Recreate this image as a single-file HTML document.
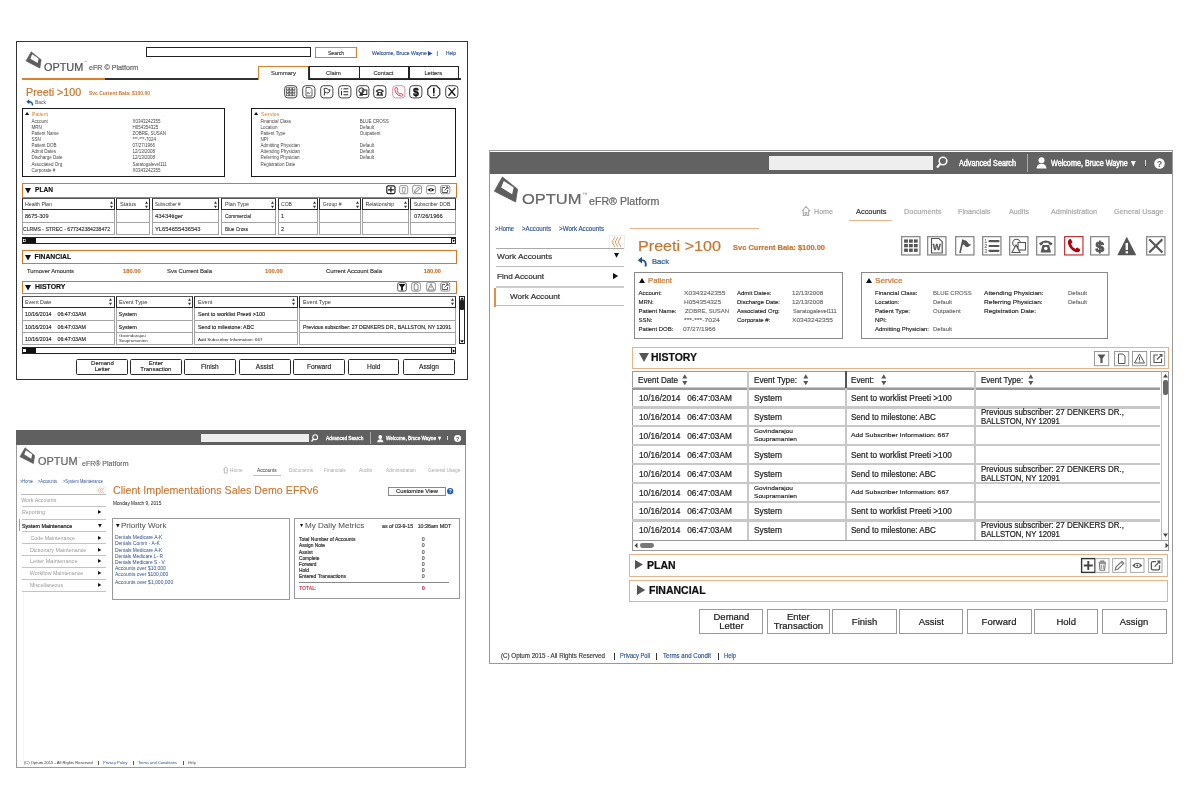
<!DOCTYPE html>
<html><head><meta charset="utf-8"><title>Optum eFR Platform wireframes</title>
<style>
html,body{margin:0;padding:0;background:#fff;}
body{width:1200px;height:800px;position:relative;overflow:hidden;font-family:"Liberation Sans",sans-serif;}
.a{position:absolute;box-sizing:border-box;}
.t{white-space:pre;}
.s{-webkit-text-stroke:0.22px currentColor;}
.s2{-webkit-text-stroke:0.14px currentColor;}
svg.a{overflow:visible;}
</style></head><body><div id="root" style="position:absolute;left:0;top:0;width:1200px;height:800px;will-change:transform;">
<div class="a" style="left:15.9px;top:41.1px;width:451.7px;height:338.5px;border:1.7px solid #333;background:#fff;"></div>
<div class="a" style="left:146px;top:47.3px;width:165.2px;height:9.5px;border:1.3px solid #222;"></div>
<div class="a" style="left:314.5px;top:47.3px;width:42.3px;height:10.3px;border:1.3px solid #d9822b;"></div>
<div class="a t s2" style="left:327.6px;top:49.9px;font-size:5.5px;line-height:6.6px;color:#333;transform:scaleX(0.918);transform-origin:0 0;">Search</div>
<div class="a t s2" style="left:372px;top:49.8px;font-size:5.5px;line-height:6.6px;color:#2b4f9f;transform:scaleX(0.933);transform-origin:0 0;">Welcome, Bruce Wayne ▶</div>
<div class="a t s2" style="left:436.5px;top:49.8px;font-size:5.5px;line-height:6.6px;color:#2b4f9f;">|</div>
<div class="a t s2" style="left:446px;top:49.8px;font-size:5.5px;line-height:6.6px;color:#2b4f9f;transform:scaleX(0.884);transform-origin:0 0;">Help</div>
<svg class="a" style="left:25.2px;top:51.4px;" width="17.16" height="17.82" viewBox="0 0 17.16 17.82"><polygon points="6.2,0.66 16.24,8.71 14.92,17.16 0.92,10.03" fill="#5e5e5e" stroke="#5e5e5e" stroke-width="0.53" stroke-linejoin="round"/><polygon points="7.13,3.3 13.6,7.59 12.67,12.01 5.41,7.66" fill="#fff"/></svg>
<div class="a t s" style="left:44px;top:60.98px;font-size:10.7px;line-height:12.83px;color:#555;transform:scaleX(1.018);transform-origin:0 0;">OPTUM</div>
<div class="a t" style="left:84px;top:60.75px;font-size:3px;line-height:3.6px;color:#666;">™</div>
<div class="a t s" style="left:88.7px;top:63.29px;font-size:7.92px;line-height:9.5px;color:#666;transform:scaleX(0.901);transform-origin:0 0;">eFR © Platform</div>
<div class="a" style="left:22px;top:78.3px;width:83px;height:1.7px;background:#d9822b;"></div>
<div class="a" style="left:105px;top:78.4px;width:154px;height:1.4px;background:#333;"></div>
<div class="a" style="left:308px;top:78.4px;width:153px;height:1.4px;background:#333;"></div>
<div class="a" style="left:258.3px;top:65.5px;width:50.5px;height:14px;border-top:1.4px solid #d9822b;border-left:1.4px solid #d9822b;border-right:1.4px solid #333;"></div>
<div class="a" style="left:308.5px;top:65.5px;width:51.2px;height:14.3px;border:1.3px solid #222;"></div>
<div class="a t s2" style="left:326.09px;top:69.72px;font-size:5.8px;line-height:6.96px;color:#333;">Claim</div>
<div class="a" style="left:358.5px;top:65.5px;width:51px;height:14.3px;border:1.3px solid #222;"></div>
<div class="a t s2" style="left:373.41px;top:69.72px;font-size:5.8px;line-height:6.96px;color:#333;">Contact</div>
<div class="a" style="left:408.3px;top:65.5px;width:51.1px;height:14.3px;border:1.3px solid #222;"></div>
<div class="a t s2" style="left:424.38px;top:69.72px;font-size:5.8px;line-height:6.96px;color:#333;">Letters</div>
<div class="a t s2" style="left:270.99px;top:69.72px;font-size:5.8px;line-height:6.96px;color:#333;">Summary</div>
<div class="a t s" style="left:25.7px;top:86.84px;font-size:10.42px;line-height:12.5px;color:#c8752f;transform:scaleX(1.032);transform-origin:0 0;">Preeti &gt;100</div>
<div class="a t" style="left:88.7px;top:90.91px;font-size:4.8px;line-height:5.76px;color:#c8752f;font-weight:bold;transform:scaleX(1.035);transform-origin:0 0;">Svc Current Bala: $100.00</div>
<svg class="a" style="left:25.5px;top:98.5px;" width="8" height="6.5" viewBox="0 0 8 6.5"><path d="M6.5 6.5 Q6.5 2.5 2.8 2.8" fill="none" stroke="#1f4f8f" stroke-width="1.4"/><path d="M0.3 2.8 L3.3 0.3 L3.3 5.3 Z" fill="#1f4f8f"/></svg>
<div class="a t" style="left:35.4px;top:99.37px;font-size:5.2px;line-height:6.24px;color:#2b5a9a;transform:scaleX(0.952);transform-origin:0 0;">Back</div>
<svg class="a" style="left:284.2px;top:85px;" width="13.6" height="13.6" viewBox="0 0 13.6 13.6"><rect x="0.7" y="0.7" width="12.2" height="12.2" rx="3" fill="#fff" stroke="#444" stroke-width="1.0"/><rect x="2.6" y="2.8" width="2.3" height="2" fill="none" stroke="#333" stroke-width="0.6"/><rect x="2.6" y="5.8" width="2.3" height="2" fill="none" stroke="#333" stroke-width="0.6"/><rect x="2.6" y="8.8" width="2.3" height="2" fill="none" stroke="#333" stroke-width="0.6"/><rect x="5.6" y="2.8" width="2.3" height="2" fill="none" stroke="#333" stroke-width="0.6"/><rect x="5.6" y="5.8" width="2.3" height="2" fill="none" stroke="#333" stroke-width="0.6"/><rect x="5.6" y="8.8" width="2.3" height="2" fill="none" stroke="#333" stroke-width="0.6"/><rect x="8.6" y="2.8" width="2.3" height="2" fill="none" stroke="#333" stroke-width="0.6"/><rect x="8.6" y="5.8" width="2.3" height="2" fill="none" stroke="#333" stroke-width="0.6"/><rect x="8.6" y="8.8" width="2.3" height="2" fill="none" stroke="#333" stroke-width="0.6"/></svg>
<svg class="a" style="left:301.5px;top:85px;" width="13.6" height="13.6" viewBox="0 0 13.6 13.6"><rect x="0.7" y="0.7" width="12.2" height="12.2" rx="3" fill="#fff" stroke="#444" stroke-width="1.0"/><path d="M4 2.5 H8.3 L10 4.2 V11 H4 Z" fill="none" stroke="#444" stroke-width="0.8"/><path d="M5 9.5 L6 7 L7 9 L8.5 7" fill="none" stroke="#444" stroke-width="0.6"/></svg>
<svg class="a" style="left:320px;top:85px;" width="13.6" height="13.6" viewBox="0 0 13.6 13.6"><rect x="0.7" y="0.7" width="12.2" height="12.2" rx="3" fill="#fff" stroke="#444" stroke-width="1.0"/><path d="M4.3 10.5 Q5 5 4 3.8 M4 3.8 Q6 2.5 7.5 4 Q9 6 10 4.5 Q10 7.5 8 8 Q6 8 5 7" fill="none" stroke="#222" stroke-width="0.9"/></svg>
<svg class="a" style="left:337.8px;top:85px;" width="13.6" height="13.6" viewBox="0 0 13.6 13.6"><rect x="0.7" y="0.7" width="12.2" height="12.2" rx="3" fill="#fff" stroke="#444" stroke-width="1.0"/><path d="M3.5 3.5 V4.3 M3.5 6 V10.3 M5.5 3.8 H10.3 M5.5 6.8 H10.3 M5.5 9.8 H10.3" stroke="#222" stroke-width="1"/></svg>
<svg class="a" style="left:355.5px;top:85px;" width="13.6" height="13.6" viewBox="0 0 13.6 13.6"><rect x="0.7" y="0.7" width="12.2" height="12.2" rx="3" fill="#fff" stroke="#444" stroke-width="1.0"/><circle cx="5.5" cy="5.5" r="2.6" fill="none" stroke="#222" stroke-width="1"/><rect x="6.3" y="5" width="4.5" height="4.5" fill="none" stroke="#222" stroke-width="1"/><path d="M5 7 L3 10.8 H7 Z" fill="#222"/></svg>
<svg class="a" style="left:373px;top:85px;" width="13.6" height="13.6" viewBox="0 0 13.6 13.6"><rect x="0.7" y="0.7" width="12.2" height="12.2" rx="3" fill="#fff" stroke="#444" stroke-width="1.0"/><path d="M2.5 6 Q6.8 1.8 11 6 L10 7.3 L8.3 6.5 V5.5 H5.3 V6.5 L3.6 7.3 Z M4.5 7 H9.1 L10.2 10.8 H3.4 Z" fill="#333"/><circle cx="6.8" cy="8.8" r="1" fill="#fff"/></svg>
<svg class="a" style="left:391.5px;top:85px;" width="13.6" height="13.6" viewBox="0 0 13.6 13.6"><rect x="0.7" y="0.7" width="12.2" height="12.2" rx="3" fill="#fff" stroke="#e090a8" stroke-width="1.0"/><path d="M3.2 3 Q4 2.2 5 2.7 L6 4.8 L5 5.8 Q5.5 8 8 9.2 L9 8.3 L11 9.8 Q10.8 11 9.5 11.2 Q5.5 11 3.5 7 Q2.5 4.5 3.2 3 Z" fill="none" stroke="#d04a68" stroke-width="1"/></svg>
<svg class="a" style="left:409px;top:85px;" width="13.6" height="13.6" viewBox="0 0 13.6 13.6"><rect x="0.7" y="0.7" width="12.2" height="12.2" rx="3" fill="#fff" stroke="#444" stroke-width="1.0"/><text x="6.8" y="11" font-size="10.5" font-weight="bold" text-anchor="middle" fill="#111" stroke="#111" stroke-width="0.4" font-family="Liberation Sans">$</text></svg>
<svg class="a" style="left:426.7px;top:85px;" width="13.6" height="13.6" viewBox="0 0 13.6 13.6"><path d="M4 0.8 H9.6 L12.8 4 V9.6 L9.6 12.8 H4 L0.8 9.6 V4 Z" fill="#fff" stroke="#222" stroke-width="1.1"/><path d="M6.8 2.8 V8.5 M6.8 9.6 V10.8" stroke="#111" stroke-width="1.6"/></svg>
<svg class="a" style="left:444.7px;top:85px;" width="13.6" height="13.6" viewBox="0 0 13.6 13.6"><rect x="0.7" y="0.7" width="12.2" height="12.2" rx="3" fill="#fff" stroke="#444" stroke-width="1.0"/><path d="M3.5 2.8 L10.3 10.8 M10.3 2.8 L3.5 10.8" stroke="#111" stroke-width="1.3"/></svg>
<div class="a" style="left:22.3px;top:107.6px;width:202.7px;height:69px;border:1.4px solid #1a1a1a;"></div>
<svg class="a" style="left:25.2px;top:111.8px;" width="4.2" height="3" viewBox="0 0 4.2 3"><path d="M2.1 0 L4.2 3 H0 Z" fill="#111"/></svg>
<div class="a t" style="left:31.75px;top:111.09px;font-size:5px;line-height:6px;color:#d9822b;transform:scaleX(1.028);transform-origin:0 0;">Patient</div>
<div class="a t" style="left:31.5px;top:118.88px;font-size:4.5px;line-height:5.4px;color:#444;">Account</div>
<div class="a t" style="left:132.4px;top:118.88px;font-size:4.5px;line-height:5.4px;color:#444;">X0343242355</div>
<div class="a t" style="left:31.5px;top:125.08px;font-size:4.5px;line-height:5.4px;color:#444;">MRN</div>
<div class="a t" style="left:132.4px;top:125.08px;font-size:4.5px;line-height:5.4px;color:#444;">H054354325</div>
<div class="a t" style="left:31.5px;top:131.28px;font-size:4.5px;line-height:5.4px;color:#444;">Patient Name</div>
<div class="a t" style="left:132.4px;top:131.28px;font-size:4.5px;line-height:5.4px;color:#444;">ZOBRE, SUSAN</div>
<div class="a t" style="left:31.5px;top:137.18px;font-size:4.5px;line-height:5.4px;color:#444;">SSN</div>
<div class="a t" style="left:132.4px;top:137.18px;font-size:4.5px;line-height:5.4px;color:#444;">***-***-7024</div>
<div class="a t" style="left:31.5px;top:143.18px;font-size:4.5px;line-height:5.4px;color:#444;">Patient DOB</div>
<div class="a t" style="left:132.4px;top:143.18px;font-size:4.5px;line-height:5.4px;color:#444;">07/27/1966</div>
<div class="a t" style="left:31.5px;top:149.38px;font-size:4.5px;line-height:5.4px;color:#444;">Admit Dates</div>
<div class="a t" style="left:132.4px;top:149.38px;font-size:4.5px;line-height:5.4px;color:#444;">12/13/2008</div>
<div class="a t" style="left:31.5px;top:155.48px;font-size:4.5px;line-height:5.4px;color:#444;">Discharge Date</div>
<div class="a t" style="left:132.4px;top:155.48px;font-size:4.5px;line-height:5.4px;color:#444;">12/13/2008</div>
<div class="a t" style="left:31.5px;top:161.68px;font-size:4.5px;line-height:5.4px;color:#444;">Associated Org</div>
<div class="a t" style="left:132.4px;top:161.68px;font-size:4.5px;line-height:5.4px;color:#444;">Saratogalevel111</div>
<div class="a t" style="left:31.5px;top:167.88px;font-size:4.5px;line-height:5.4px;color:#444;">Corporate #</div>
<div class="a t" style="left:132.4px;top:167.88px;font-size:4.5px;line-height:5.4px;color:#444;">X0343242355</div>
<div class="a" style="left:251.4px;top:107.6px;width:204.6px;height:69.4px;border:1.4px solid #1a1a1a;"></div>
<svg class="a" style="left:254.4px;top:111.8px;" width="4.2" height="3" viewBox="0 0 4.2 3"><path d="M2.1 0 L4.2 3 H0 Z" fill="#111"/></svg>
<div class="a t" style="left:260.8px;top:111.09px;font-size:5px;line-height:6px;color:#d9822b;transform:scaleX(1.110);transform-origin:0 0;">Service</div>
<div class="a t" style="left:260.6px;top:118.88px;font-size:4.5px;line-height:5.4px;color:#444;">Financial Class</div>
<div class="a t" style="left:359.7px;top:118.88px;font-size:4.5px;line-height:5.4px;color:#444;">BLUE CROSS</div>
<div class="a t" style="left:260.6px;top:125.08px;font-size:4.5px;line-height:5.4px;color:#444;">Location</div>
<div class="a t" style="left:359.7px;top:125.08px;font-size:4.5px;line-height:5.4px;color:#444;">Default</div>
<div class="a t" style="left:260.6px;top:131.28px;font-size:4.5px;line-height:5.4px;color:#444;">Patient Type</div>
<div class="a t" style="left:359.7px;top:131.28px;font-size:4.5px;line-height:5.4px;color:#444;">Outpatient</div>
<div class="a t" style="left:260.6px;top:137.18px;font-size:4.5px;line-height:5.4px;color:#444;">NPI</div>
<div class="a t" style="left:260.6px;top:143.18px;font-size:4.5px;line-height:5.4px;color:#444;">Admitting Physician</div>
<div class="a t" style="left:359.7px;top:143.18px;font-size:4.5px;line-height:5.4px;color:#444;">Default</div>
<div class="a t" style="left:260.6px;top:149.38px;font-size:4.5px;line-height:5.4px;color:#444;">Attending Physician</div>
<div class="a t" style="left:359.7px;top:149.38px;font-size:4.5px;line-height:5.4px;color:#444;">Default</div>
<div class="a t" style="left:260.6px;top:155.48px;font-size:4.5px;line-height:5.4px;color:#444;">Referring Physician</div>
<div class="a t" style="left:359.7px;top:155.48px;font-size:4.5px;line-height:5.4px;color:#444;">Default</div>
<div class="a t" style="left:260.6px;top:161.68px;font-size:4.5px;line-height:5.4px;color:#444;">Registration Date</div>
<div class="a" style="left:21.5px;top:183.3px;width:435.1px;height:14.3px;border:1.8px solid #d27a2a;"></div>
<svg class="a" style="left:25px;top:187.65px;" width="6" height="5.4" viewBox="0 0 6 5.4"><path d="M0 0 H6 L3 5.4 Z" fill="#111"/></svg>
<div class="a t s2" style="left:34.5px;top:186.49px;font-size:6.8px;line-height:8.16px;color:#111;font-weight:bold;transform:scaleX(0.972);transform-origin:0 0;">PLAN</div>
<svg class="a" style="left:386.1px;top:185.3px;" width="9.8" height="9.4" viewBox="0 0 9.8 9.4"><rect x="0.8" y="0.8" width="8.2" height="7.8" rx="1.5" fill="#fff" stroke="#222" stroke-width="1.2"/><path d="M4.9 2 V7.6 M2 4.8 H7.8" stroke="#111" stroke-width="1.2"/></svg>
<svg class="a" style="left:398.5px;top:185.3px;" width="9.4" height="9.4" viewBox="0 0 9.4 9.4"><rect x="0.65" y="0.65" width="8.1" height="8.1" rx="1.5" fill="#fff" stroke="#888" stroke-width="0.9"/><path d="M3 2.5 H6.6 M3.3 3 L3.6 7.2 H6 L6.3 3" fill="none" stroke="#777" stroke-width="0.7"/></svg>
<svg class="a" style="left:411.6px;top:185.3px;" width="10.2" height="9.4" viewBox="0 0 10.2 9.4"><rect x="0.65" y="0.65" width="8.9" height="8.1" rx="1.5" fill="#fff" stroke="#888" stroke-width="0.9"/><path d="M2.5 7.5 L3 5.5 L6.5 2 L8 3.5 L4.5 7 Z" fill="none" stroke="#555" stroke-width="0.8"/></svg>
<svg class="a" style="left:425.5px;top:185.3px;" width="10.1" height="9.4" viewBox="0 0 10.1 9.4"><rect x="0.65" y="0.65" width="8.8" height="8.1" rx="1.5" fill="#fff" stroke="#888" stroke-width="0.9"/><path d="M1.5 4.8 Q5 1.6 8.5 4.8 Q5 8 1.5 4.8 Z" fill="#111"/><circle cx="5" cy="4.8" r="0.9" fill="#fff"/></svg>
<svg class="a" style="left:440.1px;top:185.3px;" width="10.5" height="9.4" viewBox="0 0 10.5 9.4"><rect x="0.65" y="0.65" width="9.2" height="8.1" rx="1.5" fill="#fff" stroke="#888" stroke-width="0.9"/><path d="M5 2.5 H2.2 V7.5 H7.5 V5" fill="none" stroke="#444" stroke-width="0.9"/><path d="M4.5 5.5 L8 2 M6 2 H8 V4" fill="none" stroke="#444" stroke-width="0.9"/></svg>
<div class="a" style="left:21.5px;top:198.3px;width:93px;height:12.1px;border:1.2px solid #2a2a2a;border-top:1px solid #555;border-bottom-width:1.8px;"></div>
<div class="a t" style="left:25px;top:201.17px;font-size:5.2px;line-height:6.24px;color:#333;">Health Plan</div>
<svg class="a" style="left:109.5px;top:200.5px;" width="3" height="7.5" viewBox="0 0 3 7.5"><path d="M1.5 0.3 L3 2.8 H0 Z M1.5 7.2 L3 4.7 H0 Z" fill="#333"/></svg>
<div class="a" style="left:21.5px;top:210.4px;width:93px;height:12.9px;border:1.2px solid #a4a4a4;border-top-width:0;border-bottom-width:1.6px;"></div>
<div class="a" style="left:21.5px;top:223.3px;width:93px;height:11.7px;border:1.2px solid #a4a4a4;border-top-width:0;border-bottom-width:1.4px;"></div>
<div class="a t s2" style="left:25px;top:213.3px;font-size:5.5px;line-height:6.6px;color:#333;transform:scaleX(1.011);transform-origin:0 0;">8675-309</div>
<div class="a t s2" style="left:22.7px;top:225.7px;font-size:5.5px;line-height:6.6px;color:#333;transform:scaleX(0.930);transform-origin:0 0;">CLRMS - STREC - 677342384238472</div>
<div class="a" style="left:116px;top:198.3px;width:33.8px;height:12.1px;border:1.2px solid #2a2a2a;border-top:1px solid #555;border-bottom-width:1.8px;"></div>
<div class="a t" style="left:119.5px;top:201.17px;font-size:5.2px;line-height:6.24px;color:#333;transform:scaleX(1.085);transform-origin:0 0;">Status</div>
<svg class="a" style="left:144.8px;top:200.5px;" width="3" height="7.5" viewBox="0 0 3 7.5"><path d="M1.5 0.3 L3 2.8 H0 Z M1.5 7.2 L3 4.7 H0 Z" fill="#333"/></svg>
<div class="a" style="left:116px;top:210.4px;width:33.8px;height:12.9px;border:1.2px solid #a4a4a4;border-top-width:0;border-bottom-width:1.6px;"></div>
<div class="a" style="left:116px;top:223.3px;width:33.8px;height:11.7px;border:1.2px solid #a4a4a4;border-top-width:0;border-bottom-width:1.4px;"></div>
<div class="a" style="left:151.5px;top:198.3px;width:67.8px;height:12.1px;border:1.2px solid #2a2a2a;border-top:1px solid #555;border-bottom-width:1.8px;"></div>
<div class="a t" style="left:155px;top:201.17px;font-size:5.2px;line-height:6.24px;color:#333;transform:scaleX(0.880);transform-origin:0 0;">Subscriber #</div>
<svg class="a" style="left:214.3px;top:200.5px;" width="3" height="7.5" viewBox="0 0 3 7.5"><path d="M1.5 0.3 L3 2.8 H0 Z M1.5 7.2 L3 4.7 H0 Z" fill="#333"/></svg>
<div class="a" style="left:151.5px;top:210.4px;width:67.8px;height:12.9px;border:1.2px solid #a4a4a4;border-top-width:0;border-bottom-width:1.6px;"></div>
<div class="a" style="left:151.5px;top:223.3px;width:67.8px;height:11.7px;border:1.2px solid #a4a4a4;border-top-width:0;border-bottom-width:1.4px;"></div>
<div class="a t s2" style="left:155px;top:213.3px;font-size:5.5px;line-height:6.6px;color:#333;transform:scaleX(1.077);transform-origin:0 0;">43434tiger</div>
<div class="a t s2" style="left:155px;top:225.7px;font-size:5.5px;line-height:6.6px;color:#333;transform:scaleX(1.048);transform-origin:0 0;">YL654655436543</div>
<div class="a" style="left:221px;top:198.3px;width:55.4px;height:12.1px;border:1.2px solid #2a2a2a;border-top:1px solid #555;border-bottom-width:1.8px;"></div>
<div class="a t" style="left:224.5px;top:201.17px;font-size:5.2px;line-height:6.24px;color:#333;transform:scaleX(1.042);transform-origin:0 0;">Plan Type</div>
<svg class="a" style="left:271.4px;top:200.5px;" width="3" height="7.5" viewBox="0 0 3 7.5"><path d="M1.5 0.3 L3 2.8 H0 Z M1.5 7.2 L3 4.7 H0 Z" fill="#333"/></svg>
<div class="a" style="left:221px;top:210.4px;width:55.4px;height:12.9px;border:1.2px solid #a4a4a4;border-top-width:0;border-bottom-width:1.6px;"></div>
<div class="a" style="left:221px;top:223.3px;width:55.4px;height:11.7px;border:1.2px solid #a4a4a4;border-top-width:0;border-bottom-width:1.4px;"></div>
<div class="a t s2" style="left:224.5px;top:213.3px;font-size:5.5px;line-height:6.6px;color:#333;transform:scaleX(0.886);transform-origin:0 0;">Commercial</div>
<div class="a t s2" style="left:224.5px;top:225.7px;font-size:5.5px;line-height:6.6px;color:#333;transform:scaleX(0.855);transform-origin:0 0;">Blue Cross</div>
<div class="a" style="left:277.5px;top:198.3px;width:40.7px;height:12.1px;border:1.2px solid #2a2a2a;border-top:1px solid #555;border-bottom-width:1.8px;"></div>
<div class="a t" style="left:281px;top:201.17px;font-size:5.2px;line-height:6.24px;color:#333;transform:scaleX(0.976);transform-origin:0 0;">COB</div>
<svg class="a" style="left:313.2px;top:200.5px;" width="3" height="7.5" viewBox="0 0 3 7.5"><path d="M1.5 0.3 L3 2.8 H0 Z M1.5 7.2 L3 4.7 H0 Z" fill="#333"/></svg>
<div class="a" style="left:277.5px;top:210.4px;width:40.7px;height:12.9px;border:1.2px solid #a4a4a4;border-top-width:0;border-bottom-width:1.6px;"></div>
<div class="a" style="left:277.5px;top:223.3px;width:40.7px;height:11.7px;border:1.2px solid #a4a4a4;border-top-width:0;border-bottom-width:1.4px;"></div>
<div class="a t s2" style="left:281px;top:213.3px;font-size:5.5px;line-height:6.6px;color:#333;">1</div>
<div class="a t s2" style="left:281px;top:225.7px;font-size:5.5px;line-height:6.6px;color:#333;">2</div>
<div class="a" style="left:319.3px;top:198.3px;width:41.4px;height:12.1px;border:1.2px solid #2a2a2a;border-top:1px solid #555;border-bottom-width:1.8px;"></div>
<div class="a t" style="left:322.8px;top:201.17px;font-size:5.2px;line-height:6.24px;color:#333;">Group #</div>
<svg class="a" style="left:355.7px;top:200.5px;" width="3" height="7.5" viewBox="0 0 3 7.5"><path d="M1.5 0.3 L3 2.8 H0 Z M1.5 7.2 L3 4.7 H0 Z" fill="#333"/></svg>
<div class="a" style="left:319.3px;top:210.4px;width:41.4px;height:12.9px;border:1.2px solid #a4a4a4;border-top-width:0;border-bottom-width:1.6px;"></div>
<div class="a" style="left:319.3px;top:223.3px;width:41.4px;height:11.7px;border:1.2px solid #a4a4a4;border-top-width:0;border-bottom-width:1.4px;"></div>
<div class="a" style="left:362px;top:198.3px;width:47.2px;height:12.1px;border:1.2px solid #2a2a2a;border-top:1px solid #555;border-bottom-width:1.8px;"></div>
<div class="a t" style="left:365.5px;top:201.17px;font-size:5.2px;line-height:6.24px;color:#333;">Relationship</div>
<svg class="a" style="left:404.2px;top:200.5px;" width="3" height="7.5" viewBox="0 0 3 7.5"><path d="M1.5 0.3 L3 2.8 H0 Z M1.5 7.2 L3 4.7 H0 Z" fill="#333"/></svg>
<div class="a" style="left:362px;top:210.4px;width:47.2px;height:12.9px;border:1.2px solid #a4a4a4;border-top-width:0;border-bottom-width:1.6px;"></div>
<div class="a" style="left:362px;top:223.3px;width:47.2px;height:11.7px;border:1.2px solid #a4a4a4;border-top-width:0;border-bottom-width:1.4px;"></div>
<div class="a" style="left:410.4px;top:198.3px;width:45.2px;height:12.1px;border:1.2px solid #2a2a2a;border-top:1px solid #555;border-bottom-width:1.8px;"></div>
<div class="a t" style="left:413.9px;top:201.17px;font-size:5.2px;line-height:6.24px;color:#333;transform:scaleX(0.969);transform-origin:0 0;">Subscriber DOB</div>
<div class="a" style="left:410.4px;top:210.4px;width:45.2px;height:12.9px;border:1.2px solid #a4a4a4;border-top-width:0;border-bottom-width:1.6px;"></div>
<div class="a" style="left:410.4px;top:223.3px;width:45.2px;height:11.7px;border:1.2px solid #a4a4a4;border-top-width:0;border-bottom-width:1.4px;"></div>
<div class="a t s2" style="left:413.9px;top:213.3px;font-size:5.5px;line-height:6.6px;color:#333;transform:scaleX(1.043);transform-origin:0 0;">07/26/1966</div>
<div class="a" style="left:21.5px;top:237px;width:434.7px;height:6.6px;border:1.2px solid #222;"></div>
<div class="a" style="left:22.5px;top:238px;width:13.5px;height:4.6px;background:#111;"></div>
<div class="a" style="left:23px;top:238.6px;width:3px;height:3.4px;background:#fff;"></div>
<svg class="a" style="left:23.2px;top:238.8px;" width="2.6" height="3" viewBox="0 0 2.6 3"><path d="M0.3 1.5 L2.5 0 V3 Z" fill="#111"/></svg>
<div class="a" style="left:451px;top:238px;width:5.2px;height:5.6px;border:1px solid #222;"></div>
<svg class="a" style="left:452px;top:239px;" width="3.5" height="3.5" viewBox="0 0 3.5 3.5"><path d="M3 1.7 L0.8 0.2 V3.2 Z" fill="#111"/></svg>
<div class="a" style="left:21.5px;top:250.4px;width:435.1px;height:13.9px;border:1.8px solid #d27a2a;"></div>
<svg class="a" style="left:25px;top:254.55px;" width="6" height="5.4" viewBox="0 0 6 5.4"><path d="M0 0 H6 L3 5.4 Z" fill="#111"/></svg>
<div class="a t s2" style="left:34.5px;top:253.39px;font-size:6.8px;line-height:8.16px;color:#111;font-weight:bold;">FINANCIAL</div>
<div class="a t s2" style="left:26.5px;top:268.24px;font-size:5.6px;line-height:6.72px;color:#333;transform:scaleX(1.032);transform-origin:0 0;">Turnover Amounts</div>
<div class="a t s2" style="left:123.3px;top:268.24px;font-size:5.6px;line-height:6.72px;color:#c8752f;font-weight:bold;transform:scaleX(1.039);transform-origin:0 0;">180.00</div>
<div class="a t s2" style="left:167.4px;top:268.24px;font-size:5.6px;line-height:6.72px;color:#333;transform:scaleX(1.063);transform-origin:0 0;">Svs Current Bala</div>
<div class="a t s2" style="left:264.7px;top:268.24px;font-size:5.6px;line-height:6.72px;color:#c8752f;font-weight:bold;transform:scaleX(1.039);transform-origin:0 0;">100.00</div>
<div class="a t s2" style="left:326px;top:268.24px;font-size:5.6px;line-height:6.72px;color:#333;transform:scaleX(1.058);transform-origin:0 0;">Current Account Bala</div>
<div class="a t s2" style="left:423.8px;top:268.24px;font-size:5.6px;line-height:6.72px;color:#c8752f;font-weight:bold;">180.00</div>
<div class="a" style="left:21.5px;top:280.5px;width:435.1px;height:13.7px;border:1.8px solid #d27a2a;"></div>
<svg class="a" style="left:25px;top:284.55px;" width="6" height="5.4" viewBox="0 0 6 5.4"><path d="M0 0 H6 L3 5.4 Z" fill="#111"/></svg>
<div class="a t s2" style="left:34.5px;top:283.39px;font-size:6.8px;line-height:8.16px;color:#111;font-weight:bold;transform:scaleX(1.022);transform-origin:0 0;">HISTORY</div>
<svg class="a" style="left:396.6px;top:282.4px;" width="10" height="9.8" viewBox="0 0 10 9.8"><rect x="0.7" y="0.7" width="8.6" height="8.4" rx="1.5" fill="#fff" stroke="#555" stroke-width="1.0"/><path d="M1.6 2 H8.4 L5.9 5.2 V8.6 H4.1 V5.2 Z" fill="#111"/></svg>
<svg class="a" style="left:411px;top:282.4px;" width="10" height="9.8" viewBox="0 0 10 9.8"><rect x="0.65" y="0.65" width="8.7" height="8.5" rx="1.5" fill="#fff" stroke="#888" stroke-width="0.9"/><path d="M3.2 2 H6 L7 3 V8 H3.2 Z" fill="none" stroke="#555" stroke-width="0.7"/></svg>
<svg class="a" style="left:425.5px;top:282.4px;" width="10" height="9.8" viewBox="0 0 10 9.8"><rect x="0.65" y="0.65" width="8.7" height="8.5" rx="1.5" fill="#fff" stroke="#888" stroke-width="0.9"/><path d="M5 1.8 L8.2 8 H1.8 Z" fill="none" stroke="#555" stroke-width="0.7"/><path d="M5 4 V6.2" stroke="#555" stroke-width="0.7"/></svg>
<svg class="a" style="left:440.2px;top:282.4px;" width="10.4" height="9.8" viewBox="0 0 10.4 9.8"><rect x="0.65" y="0.65" width="9.1" height="8.5" rx="1.5" fill="#fff" stroke="#888" stroke-width="0.9"/><path d="M5 2.5 H2.2 V7.5 H7.5 V5" fill="none" stroke="#444" stroke-width="0.9"/><path d="M4.5 5.5 L8 2 M6 2 H8 V4" fill="none" stroke="#444" stroke-width="0.9"/></svg>
<div class="a" style="left:21.5px;top:295.8px;width:93.3px;height:11.8px;border:1.2px solid #2a2a2a;border-top:1px solid #555;border-bottom-width:1.8px;"></div>
<div class="a t" style="left:25px;top:298.57px;font-size:5.2px;line-height:6.24px;color:#333;transform:scaleX(1.026);transform-origin:0 0;">Event Date</div>
<svg class="a" style="left:109.3px;top:298px;" width="3" height="7.5" viewBox="0 0 3 7.5"><path d="M1.5 0.3 L3 2.8 H0 Z M1.5 7.2 L3 4.7 H0 Z" fill="#333"/></svg>
<div class="a" style="left:21.5px;top:307.6px;width:93.3px;height:13.2px;border:1.2px solid #a4a4a4;border-top-width:0;border-bottom-width:1.6px;"></div>
<div class="a" style="left:21.5px;top:320.8px;width:93.3px;height:12.4px;border:1.2px solid #a4a4a4;border-top-width:0;border-bottom-width:1.6px;"></div>
<div class="a" style="left:21.5px;top:333.2px;width:93.3px;height:11.6px;border:1.2px solid #a4a4a4;border-top-width:0;border-bottom-width:1.6px;"></div>
<div class="a" style="left:115.6px;top:295.8px;width:77.9px;height:11.8px;border:1.2px solid #2a2a2a;border-top:1px solid #555;border-bottom-width:1.8px;"></div>
<div class="a t" style="left:119.1px;top:298.57px;font-size:5.2px;line-height:6.24px;color:#333;transform:scaleX(1.096);transform-origin:0 0;">Event Type</div>
<svg class="a" style="left:188px;top:298px;" width="3" height="7.5" viewBox="0 0 3 7.5"><path d="M1.5 0.3 L3 2.8 H0 Z M1.5 7.2 L3 4.7 H0 Z" fill="#333"/></svg>
<div class="a" style="left:115.6px;top:307.6px;width:77.9px;height:13.2px;border:1.2px solid #a4a4a4;border-top-width:0;border-bottom-width:1.6px;"></div>
<div class="a" style="left:115.6px;top:320.8px;width:77.9px;height:12.4px;border:1.2px solid #a4a4a4;border-top-width:0;border-bottom-width:1.6px;"></div>
<div class="a" style="left:115.6px;top:333.2px;width:77.9px;height:11.6px;border:1.2px solid #a4a4a4;border-top-width:0;border-bottom-width:1.6px;"></div>
<div class="a" style="left:194.2px;top:295.8px;width:103.4px;height:11.8px;border:1.2px solid #2a2a2a;border-top:1px solid #555;border-bottom-width:1.8px;"></div>
<div class="a t" style="left:197.7px;top:298.57px;font-size:5.2px;line-height:6.24px;color:#333;transform:scaleX(1.083);transform-origin:0 0;">Event</div>
<svg class="a" style="left:292.1px;top:298px;" width="3" height="7.5" viewBox="0 0 3 7.5"><path d="M1.5 0.3 L3 2.8 H0 Z M1.5 7.2 L3 4.7 H0 Z" fill="#333"/></svg>
<div class="a" style="left:194.2px;top:307.6px;width:103.4px;height:13.2px;border:1.2px solid #a4a4a4;border-top-width:0;border-bottom-width:1.6px;"></div>
<div class="a" style="left:194.2px;top:320.8px;width:103.4px;height:12.4px;border:1.2px solid #a4a4a4;border-top-width:0;border-bottom-width:1.6px;"></div>
<div class="a" style="left:194.2px;top:333.2px;width:103.4px;height:11.6px;border:1.2px solid #a4a4a4;border-top-width:0;border-bottom-width:1.6px;"></div>
<div class="a" style="left:299.4px;top:295.8px;width:156.6px;height:11.8px;border:1.2px solid #2a2a2a;border-top:1px solid #555;border-bottom-width:1.8px;"></div>
<div class="a t" style="left:302.9px;top:298.57px;font-size:5.2px;line-height:6.24px;color:#333;transform:scaleX(1.080);transform-origin:0 0;">Event Type</div>
<svg class="a" style="left:450.5px;top:298px;" width="3" height="7.5" viewBox="0 0 3 7.5"><path d="M1.5 0.3 L3 2.8 H0 Z M1.5 7.2 L3 4.7 H0 Z" fill="#333"/></svg>
<div class="a" style="left:299.4px;top:307.6px;width:156.6px;height:13.2px;border:1.2px solid #a4a4a4;border-top-width:0;border-bottom-width:1.6px;"></div>
<div class="a" style="left:299.4px;top:320.8px;width:156.6px;height:12.4px;border:1.2px solid #a4a4a4;border-top-width:0;border-bottom-width:1.6px;"></div>
<div class="a" style="left:299.4px;top:333.2px;width:156.6px;height:11.6px;border:1.2px solid #a4a4a4;border-top-width:0;border-bottom-width:1.6px;"></div>
<div class="a t s2" style="left:25px;top:311px;font-size:5.5px;line-height:6.6px;color:#222;transform:scaleX(0.964);transform-origin:0 0;">10/16/2014    06:47:03AM</div>
<div class="a t s2" style="left:118.5px;top:311px;font-size:5.5px;line-height:6.6px;color:#222;">System</div>
<div class="a t s2" style="left:198px;top:311px;font-size:5.5px;line-height:6.6px;color:#222;">Sent to worklist Preeti &gt;100</div>
<div class="a t s2" style="left:25px;top:323.8px;font-size:5.5px;line-height:6.6px;color:#222;transform:scaleX(0.964);transform-origin:0 0;">10/16/2014    06:47:03AM</div>
<div class="a t s2" style="left:118.5px;top:323.8px;font-size:5.5px;line-height:6.6px;color:#222;">System</div>
<div class="a t s2" style="left:198px;top:323.8px;font-size:5.5px;line-height:6.6px;color:#222;transform:scaleX(0.964);transform-origin:0 0;">Send to milestone: ABC</div>
<div class="a t s2" style="left:302.6px;top:323.8px;font-size:5.5px;line-height:6.6px;color:#222;transform:scaleX(0.951);transform-origin:0 0;">Previous subscriber: 27 DENKERS DR., BALLSTON, NY 12091</div>
<div class="a t s2" style="left:25px;top:335.8px;font-size:5.5px;line-height:6.6px;color:#222;transform:scaleX(0.964);transform-origin:0 0;">10/16/2014    06:47:03AM</div>
<div class="a t" style="left:118.5px;top:334.19px;font-size:3.8px;line-height:4.56px;color:#333;transform:scaleX(1.186);transform-origin:0 0;">Govindarajou</div>
<div class="a t" style="left:118.5px;top:339.39px;font-size:3.8px;line-height:4.56px;color:#333;transform:scaleX(1.161);transform-origin:0 0;">Soupramanien</div>
<div class="a t" style="left:198px;top:336.5px;font-size:4.3px;line-height:5.16px;color:#222;transform:scaleX(1.048);transform-origin:0 0;">Add Subscriber Information: 667</div>
<div class="a" style="left:458.6px;top:296px;width:6.2px;height:47.6px;border:1.1px solid #222;"></div>
<div class="a" style="left:459.8px;top:300px;width:3.8px;height:10px;background:#222;border-radius:1px;"></div>
<svg class="a" style="left:459.6px;top:296.5px;" width="4.2" height="3" viewBox="0 0 4.2 3"><path d="M2.1 0.3 L4 2.8 H0.2 Z" fill="#111"/></svg>
<svg class="a" style="left:459.6px;top:340px;" width="4.2" height="3" viewBox="0 0 4.2 3"><path d="M2.1 2.8 L4 0.3 H0.2 Z" fill="#111"/></svg>
<div class="a" style="left:21.5px;top:347px;width:434.5px;height:6.8px;border:1.2px solid #222;"></div>
<div class="a" style="left:22.5px;top:348px;width:13.5px;height:4.8px;background:#111;"></div>
<div class="a" style="left:23px;top:348.6px;width:3px;height:3.6px;background:#fff;"></div>
<div class="a" style="left:450.5px;top:347px;width:5.5px;height:6.8px;border:1px solid #222;"></div>
<svg class="a" style="left:451.5px;top:348.5px;" width="3.5" height="4" viewBox="0 0 3.5 4"><path d="M3 2 L0.8 0.3 V3.7 Z" fill="#111"/></svg>
<div class="a" style="left:76.3px;top:358.6px;width:52.2px;height:16px;border:1.8px solid #2a2a2a;border-radius:1.5px;"></div>
<div class="a t s2" style="left:91.06px;top:359.81px;font-size:6px;line-height:7.2px;color:#222;">Demand</div>
<div class="a t s2" style="left:94.73px;top:366.11px;font-size:6px;line-height:7.2px;color:#222;">Letter</div>
<div class="a" style="left:130px;top:358.6px;width:51.8px;height:16px;border:1.8px solid #2a2a2a;border-radius:1.5px;"></div>
<div class="a t s2" style="left:148.73px;top:359.81px;font-size:6px;line-height:7.2px;color:#222;">Enter</div>
<div class="a t s2" style="left:140.34px;top:366.11px;font-size:6px;line-height:7.2px;color:#222;">Transaction</div>
<div class="a" style="left:184px;top:358.6px;width:51.8px;height:16px;border:1.8px solid #2a2a2a;border-radius:1.5px;"></div>
<div class="a t s2" style="left:201.1px;top:362.76px;font-size:6.6px;line-height:7.92px;color:#222;">Finish</div>
<div class="a" style="left:238.6px;top:358.6px;width:52px;height:16px;border:1.8px solid #2a2a2a;border-radius:1.5px;"></div>
<div class="a t s2" style="left:255.8px;top:362.76px;font-size:6.6px;line-height:7.92px;color:#222;">Assist</div>
<div class="a" style="left:293.4px;top:358.6px;width:51.2px;height:16px;border:1.8px solid #2a2a2a;border-radius:1.5px;"></div>
<div class="a t s2" style="left:306.9px;top:362.76px;font-size:6.6px;line-height:7.92px;color:#222;">Forward</div>
<div class="a" style="left:348px;top:358.6px;width:51.4px;height:16px;border:1.8px solid #2a2a2a;border-radius:1.5px;"></div>
<div class="a t s2" style="left:366.91px;top:362.76px;font-size:6.6px;line-height:7.92px;color:#222;">Hold</div>
<div class="a" style="left:403px;top:358.6px;width:52px;height:16px;border:1.8px solid #2a2a2a;border-radius:1.5px;"></div>
<div class="a t s2" style="left:419.09px;top:362.76px;font-size:6.6px;line-height:7.92px;color:#222;">Assign</div>
<div class="a" style="left:16.3px;top:430.3px;width:449.7px;height:337.7px;border:1px solid #9a9a9a;background:#fff;"></div>
<div class="a" style="left:16.3px;top:430.3px;width:449.7px;height:14.9px;background:#606060;"></div>
<div class="a" style="left:201px;top:434px;width:107.5px;height:8.2px;background:#eee;"></div>
<svg class="a" style="left:310.8px;top:434px;" width="6.8" height="8" viewBox="0 0 6.8 8"><circle cx="4.2" cy="3.2" r="2.4" fill="none" stroke="#fff" stroke-width="1.1"/><line x1="2.5" y1="5" x2="0.5" y2="7.5" stroke="#fff" stroke-width="1.3"/></svg>
<div class="a t" style="left:325.6px;top:435.06px;font-size:5.4px;line-height:6.48px;color:#fff;transform:scaleX(0.877);transform-origin:0 0;-webkit-text-stroke:0.3px #fff;">Advanced Search</div>
<div class="a" style="left:370.3px;top:432px;width:0.7px;height:11.5px;background:#aaa;"></div>
<svg class="a" style="left:377px;top:434.5px;" width="6.6" height="7.5" viewBox="0 0 6.6 7.5"><circle cx="3.3" cy="2" r="1.9" fill="#fff"/><path d="M0.2 7.3 Q0.4 4.3 3.3 4.3 Q6.2 4.3 6.4 7.3 Z" fill="#fff"/></svg>
<div class="a t" style="left:386px;top:435.06px;font-size:5.4px;line-height:6.48px;color:#fff;transform:scaleX(0.869);transform-origin:0 0;-webkit-text-stroke:0.3px #fff;">Welcome, Bruce Wayne ▼</div>
<div class="a" style="left:447.2px;top:436px;width:0.7px;height:4px;background:#ddd;"></div>
<svg class="a" style="left:453.6px;top:434.6px;" width="7.2" height="7.2" viewBox="0 0 7.2 7.2"><circle cx="3.6" cy="3.6" r="3.5" fill="#fff"/><text x="3.6" y="5.8" font-size="6" font-weight="bold" text-anchor="middle" fill="#606060" font-family="Liberation Sans">?</text></svg>
<svg class="a" style="left:18.8px;top:447px;" width="16.64" height="17.28" viewBox="0 0 16.64 17.28"><polygon points="6.02,0.64 15.74,8.45 14.46,16.64 0.9,9.73" fill="#5e5e5e" stroke="#5e5e5e" stroke-width="0.51" stroke-linejoin="round"/><polygon points="6.91,3.2 13.18,7.36 12.29,11.65 5.25,7.42" fill="#fff"/></svg>
<div class="a t s" style="left:37.5px;top:455.78px;font-size:10px;line-height:12px;color:#666;transform:scaleX(1.094);transform-origin:0 0;">OPTUM</div>
<div class="a t" style="left:78px;top:456.75px;font-size:3px;line-height:3.6px;color:#888;">™</div>
<div class="a t s2" style="left:82px;top:459.62px;font-size:6.5px;line-height:7.8px;color:#666;transform:scaleX(1.079);transform-origin:0 0;">eFR® Platform</div>
<svg class="a" style="left:222.5px;top:466px;" width="5.5" height="7.5" viewBox="0 0 5.5 7.5"><path d="M0.5 3.5 L2.7 0.8 L5 3.5 M1.3 3 V7 H4.2 V3" fill="none" stroke="#aaa" stroke-width="0.8"/></svg>
<div class="a t" style="left:230px;top:466.97px;font-size:5.2px;line-height:6.24px;color:#aaa;transform:scaleX(0.908);transform-origin:0 0;">Home</div>
<div class="a t" style="left:257.4px;top:466.97px;font-size:5.2px;line-height:6.24px;color:#333;transform:scaleX(0.926);transform-origin:0 0;">Accounts</div>
<div class="a t" style="left:289px;top:466.97px;font-size:5.2px;line-height:6.24px;color:#aaa;transform:scaleX(0.920);transform-origin:0 0;">Documents</div>
<div class="a t" style="left:324.3px;top:466.97px;font-size:5.2px;line-height:6.24px;color:#aaa;transform:scaleX(0.927);transform-origin:0 0;">Financials</div>
<div class="a t" style="left:358.6px;top:466.97px;font-size:5.2px;line-height:6.24px;color:#aaa;transform:scaleX(0.927);transform-origin:0 0;">Audits</div>
<div class="a t" style="left:386px;top:466.97px;font-size:5.2px;line-height:6.24px;color:#aaa;transform:scaleX(0.911);transform-origin:0 0;">Administration</div>
<div class="a t" style="left:427.6px;top:466.97px;font-size:5.2px;line-height:6.24px;color:#aaa;transform:scaleX(0.926);transform-origin:0 0;">General Usage</div>
<div class="a" style="left:252.5px;top:474.8px;width:28.5px;height:1px;background:#e8b48a;"></div>
<div class="a t" style="left:20px;top:478.39px;font-size:5px;line-height:6px;color:#2b4f8f;transform:scaleX(0.800);transform-origin:0 0;">&gt;Home</div>
<div class="a t" style="left:38px;top:478.39px;font-size:5px;line-height:6px;color:#2b4f8f;transform:scaleX(0.809);transform-origin:0 0;">&gt;Accounts</div>
<div class="a t" style="left:63px;top:478.39px;font-size:5px;line-height:6px;color:#2b4f8f;transform:scaleX(0.806);transform-origin:0 0;">&gt;System Maintenance</div>
<svg class="a" style="left:96px;top:485.5px;" width="9.8" height="9" viewBox="0 0 9.8 9"><rect x="0.3" y="0.3" width="9.2" height="8.4" fill="#fff" stroke="#eee" stroke-width="0.6"/><path d="M4 1.5 L2 4.5 L4 7.5 M6 1.5 L4 4.5 L6 7.5 M8 1.5 L6 4.5 L8 7.5" fill="none" stroke="#e0a060" stroke-width="0.7"/></svg>
<div class="a" style="left:20.5px;top:494px;width:85.3px;height:0.9px;background:#bbb;"></div>
<div class="a t" style="left:21.2px;top:496.82px;font-size:5.3px;line-height:6.36px;color:#999;">Work Accounts</div>
<div class="a t" style="left:22px;top:508.92px;font-size:5.3px;line-height:6.36px;color:#999;">Reporting</div>
<svg class="a" style="left:98.4px;top:510.1px;" width="3.4" height="3.8" viewBox="0 0 3.4 3.8"><path d="M0 0 L3.4 1.9 L0 3.8 Z" fill="#111"/></svg>
<div class="a t" style="left:21.5px;top:522.72px;font-size:5.3px;line-height:6.36px;color:#222;transform:scaleX(1.016);transform-origin:0 0;-webkit-text-stroke:0.2px #222;">System Maintenance</div>
<svg class="a" style="left:98.2px;top:524.2px;" width="3.8" height="3.4" viewBox="0 0 3.8 3.4"><path d="M0 0 H3.8 L1.9 3.4 Z" fill="#111"/></svg>
<div class="a t" style="left:30.5px;top:535.02px;font-size:5.3px;line-height:6.36px;color:#999;">Code Maintenance</div>
<svg class="a" style="left:98.4px;top:536.2px;" width="3.4" height="3.8" viewBox="0 0 3.4 3.8"><path d="M0 0 L3.4 1.9 L0 3.8 Z" fill="#111"/></svg>
<div class="a t" style="left:29.8px;top:546.52px;font-size:5.3px;line-height:6.36px;color:#999;transform:scaleX(1.018);transform-origin:0 0;">Dictionary Maintenance</div>
<svg class="a" style="left:98.4px;top:547.7px;" width="3.4" height="3.8" viewBox="0 0 3.4 3.8"><path d="M0 0 L3.4 1.9 L0 3.8 Z" fill="#111"/></svg>
<div class="a t" style="left:29.8px;top:558.22px;font-size:5.3px;line-height:6.36px;color:#999;transform:scaleX(1.047);transform-origin:0 0;">Letter Maintenance</div>
<svg class="a" style="left:98.4px;top:559.4px;" width="3.4" height="3.8" viewBox="0 0 3.4 3.8"><path d="M0 0 L3.4 1.9 L0 3.8 Z" fill="#111"/></svg>
<div class="a t" style="left:29.8px;top:570.12px;font-size:5.3px;line-height:6.36px;color:#999;">Workflow Maintenance</div>
<svg class="a" style="left:98.4px;top:571.3px;" width="3.4" height="3.8" viewBox="0 0 3.4 3.8"><path d="M0 0 L3.4 1.9 L0 3.8 Z" fill="#111"/></svg>
<div class="a t" style="left:29.8px;top:582.22px;font-size:5.3px;line-height:6.36px;color:#999;transform:scaleX(0.983);transform-origin:0 0;">Miscellaneous</div>
<svg class="a" style="left:98.4px;top:583.4px;" width="3.4" height="3.8" viewBox="0 0 3.4 3.8"><path d="M0 0 L3.4 1.9 L0 3.8 Z" fill="#111"/></svg>
<div class="a" style="left:21.5px;top:505.8px;width:84px;height:1px;background:#c4c4c4;"></div>
<div class="a" style="left:21.5px;top:518.9px;width:84px;height:1px;background:#c4c4c4;"></div>
<div class="a" style="left:21.5px;top:531.3px;width:84px;height:1px;background:#c4c4c4;"></div>
<div class="a" style="left:21.5px;top:543px;width:84px;height:1px;background:#c4c4c4;"></div>
<div class="a" style="left:21.5px;top:554.9px;width:84px;height:1px;background:#c4c4c4;"></div>
<div class="a" style="left:21.5px;top:567px;width:84px;height:1px;background:#c4c4c4;"></div>
<div class="a" style="left:21.5px;top:579px;width:84px;height:1px;background:#c4c4c4;"></div>
<div class="a" style="left:21.5px;top:591.1px;width:84px;height:1px;background:#c4c4c4;"></div>
<div class="a" style="left:19px;top:519.2px;width:1.4px;height:12px;background:#e0904a;"></div>
<div class="a" style="left:23.3px;top:592px;width:0.6px;height:175px;background:#f7f7f7;"></div>
<div class="a t" style="left:112.5px;top:483.8px;font-size:11px;line-height:13.2px;color:#c8752f;transform:scaleX(0.971);transform-origin:0 0;-webkit-text-stroke:0.12px #c8752f;">Client Implementations Sales Demo EFRv6</div>
<div class="a t" style="left:112.5px;top:499.59px;font-size:5px;line-height:6px;color:#333;transform:scaleX(0.944);transform-origin:0 0;-webkit-text-stroke:0.05px #333;">Monday March 9, 2015</div>
<div class="a" style="left:439px;top:486.6px;width:7px;height:9px;"></div>
<div class="a" style="left:388px;top:486.6px;width:58px;height:9.2px;border:1px solid #888;"></div>
<div class="a t s2" style="left:396px;top:487.94px;font-size:5.6px;line-height:6.72px;color:#222;transform:scaleX(1.049);transform-origin:0 0;">Customize View</div>
<svg class="a" style="left:447px;top:487.8px;" width="6.4" height="6.4" viewBox="0 0 6.4 6.4"><circle cx="3.2" cy="3.2" r="3.1" fill="#1f5fa8"/><text x="3.2" y="5.2" font-size="5" font-weight="bold" text-anchor="middle" fill="#fff" font-family="Liberation Sans">?</text></svg>
<div class="a" style="left:112px;top:517.7px;width:177.9px;height:82.1px;border:1px solid #9a9a9a;"></div>
<svg class="a" style="left:116.3px;top:523.6px;" width="3.6" height="3.4" viewBox="0 0 3.6 3.4"><path d="M0 0 H3.6 L1.8 3.4 Z" fill="#111"/></svg>
<div class="a t" style="left:120.8px;top:521.32px;font-size:7.7px;line-height:9.24px;color:#555;transform:scaleX(1.036);transform-origin:0 0;-webkit-text-stroke:0.05px #555;">Priority Work</div>
<div class="a t" style="left:115px;top:534.17px;font-size:5.2px;line-height:6.24px;color:#2b4f8f;transform:scaleX(0.950);transform-origin:0 0;">Denials Medicare A-K</div>
<div class="a t" style="left:115px;top:540.27px;font-size:5.2px;line-height:6.24px;color:#2b4f8f;transform:scaleX(0.955);transform-origin:0 0;">Denials Comm - A-K</div>
<div class="a t" style="left:115px;top:546.67px;font-size:5.2px;line-height:6.24px;color:#2b4f8f;transform:scaleX(0.950);transform-origin:0 0;">Denials Medicare A-K</div>
<div class="a t" style="left:115px;top:552.67px;font-size:5.2px;line-height:6.24px;color:#2b4f8f;transform:scaleX(0.933);transform-origin:0 0;">Denials Medicare L- R</div>
<div class="a t" style="left:115px;top:558.77px;font-size:5.2px;line-height:6.24px;color:#2b4f8f;transform:scaleX(0.940);transform-origin:0 0;">Denials Medicare S - V</div>
<div class="a t" style="left:115px;top:564.97px;font-size:5.2px;line-height:6.24px;color:#2b4f8f;transform:scaleX(0.959);transform-origin:0 0;">Accounts over $10,000</div>
<div class="a t" style="left:115px;top:571.27px;font-size:5.2px;line-height:6.24px;color:#2b4f8f;transform:scaleX(0.954);transform-origin:0 0;">Accounts over $100,000</div>
<div class="a t" style="left:115px;top:578.67px;font-size:5.2px;line-height:6.24px;color:#2b4f8f;transform:scaleX(0.965);transform-origin:0 0;">Accounts over $1,000,000</div>
<div class="a" style="left:294.4px;top:517.6px;width:165.3px;height:81.8px;border:1px solid #9a9a9a;"></div>
<svg class="a" style="left:299.9px;top:523.6px;" width="3.1" height="3.2" viewBox="0 0 3.1 3.2"><path d="M0 0 H3.1 L1.55 3 Z" fill="#111"/></svg>
<div class="a t" style="left:304.6px;top:520.82px;font-size:7.7px;line-height:9.24px;color:#555;transform:scaleX(1.052);transform-origin:0 0;-webkit-text-stroke:0.05px #555;">My Daily Metrics</div>
<div class="a t" style="left:381.9px;top:522.66px;font-size:5.4px;line-height:6.48px;color:#333;transform:scaleX(0.983);transform-origin:0 0;-webkit-text-stroke:0.2px #333;">as of 03-9-15   10:36am MDT</div>
<div class="a t" style="left:298.75px;top:536.17px;font-size:5.2px;line-height:6.24px;color:#333;transform:scaleX(0.954);transform-origin:0 0;-webkit-text-stroke:0.2px #333;">Total Number of Accounts</div>
<div class="a t" style="left:421.75px;top:536.17px;font-size:5.2px;line-height:6.24px;color:#444;-webkit-text-stroke:0.15px #444;">0</div>
<div class="a t" style="left:298.75px;top:542.35px;font-size:5.2px;line-height:6.24px;color:#333;transform:scaleX(0.927);transform-origin:0 0;-webkit-text-stroke:0.2px #333;">Assign Note</div>
<div class="a t" style="left:421.75px;top:542.35px;font-size:5.2px;line-height:6.24px;color:#444;-webkit-text-stroke:0.15px #444;">0</div>
<div class="a t" style="left:298.75px;top:548.53px;font-size:5.2px;line-height:6.24px;color:#333;-webkit-text-stroke:0.2px #333;">Assist</div>
<div class="a t" style="left:421.75px;top:548.53px;font-size:5.2px;line-height:6.24px;color:#444;-webkit-text-stroke:0.15px #444;">0</div>
<div class="a t" style="left:298.75px;top:554.71px;font-size:5.2px;line-height:6.24px;color:#333;transform:scaleX(0.921);transform-origin:0 0;-webkit-text-stroke:0.2px #333;">Complete</div>
<div class="a t" style="left:421.75px;top:554.71px;font-size:5.2px;line-height:6.24px;color:#444;-webkit-text-stroke:0.15px #444;">0</div>
<div class="a t" style="left:298.75px;top:560.89px;font-size:5.2px;line-height:6.24px;color:#333;transform:scaleX(0.918);transform-origin:0 0;-webkit-text-stroke:0.2px #333;">Forward</div>
<div class="a t" style="left:421.75px;top:560.89px;font-size:5.2px;line-height:6.24px;color:#444;-webkit-text-stroke:0.15px #444;">0</div>
<div class="a t" style="left:298.75px;top:567.07px;font-size:5.2px;line-height:6.24px;color:#333;transform:scaleX(0.935);transform-origin:0 0;-webkit-text-stroke:0.2px #333;">Hold</div>
<div class="a t" style="left:421.75px;top:567.07px;font-size:5.2px;line-height:6.24px;color:#444;-webkit-text-stroke:0.15px #444;">0</div>
<div class="a t" style="left:298.75px;top:573.25px;font-size:5.2px;line-height:6.24px;color:#333;transform:scaleX(0.956);transform-origin:0 0;-webkit-text-stroke:0.2px #333;">Entered Transactions</div>
<div class="a t" style="left:421.75px;top:573.25px;font-size:5.2px;line-height:6.24px;color:#444;-webkit-text-stroke:0.15px #444;">0</div>
<div class="a" style="left:298.75px;top:581.9px;width:150.25px;height:0.7px;background:#888;"></div>
<div class="a t s2" style="left:298.75px;top:585.49px;font-size:5.6px;line-height:6.72px;color:#c0304a;transform:scaleX(0.917);transform-origin:0 0;">TOTAL:</div>
<div class="a t s2" style="left:421.64px;top:585.49px;font-size:5.6px;line-height:6.72px;color:#c0304a;font-weight:bold;">0</div>
<div class="a t" style="left:24px;top:760.04px;font-size:4.4px;line-height:5.28px;color:#333;transform:scaleX(0.934);transform-origin:0 0;">(C) Optum 2015 - All Rights Reserved</div>
<div class="a" style="left:98.2px;top:760.6px;width:0.7px;height:4.2px;background:#555;"></div>
<div class="a" style="left:133.2px;top:760.6px;width:0.7px;height:4.2px;background:#555;"></div>
<div class="a" style="left:183.2px;top:760.6px;width:0.7px;height:4.2px;background:#555;"></div>
<div class="a t" style="left:103.4px;top:759.74px;font-size:4.4px;line-height:5.28px;color:#2b4f8f;transform:scaleX(0.898);transform-origin:0 0;">Privacy Policy</div>
<div class="a t" style="left:138px;top:760.04px;font-size:4.4px;line-height:5.28px;color:#2b4f8f;transform:scaleX(0.916);transform-origin:0 0;">Terms and Conditions</div>
<div class="a t" style="left:188px;top:760.04px;font-size:4.4px;line-height:5.28px;color:#555;transform:scaleX(0.884);transform-origin:0 0;">Help</div>
<div class="a" style="left:489px;top:150px;width:684px;height:513.8px;border:1px solid #9a9a9a;background:#fff;"></div>
<div class="a" style="left:490px;top:151.8px;width:682px;height:22.2px;background:#626262;"></div>
<div class="a" style="left:769px;top:156.4px;width:164px;height:13.2px;background:#eeeeee;"></div>
<svg class="a" style="left:936px;top:156px;" width="12" height="13" viewBox="0 0 12 13"><circle cx="7" cy="5" r="3.8" fill="none" stroke="#fff" stroke-width="1.6"/><line x1="4.3" y1="7.8" x2="1" y2="11.5" stroke="#fff" stroke-width="2"/></svg>
<div class="a t" style="left:959px;top:158.67px;font-size:8.3px;line-height:9.96px;color:#fff;transform:scaleX(0.870);transform-origin:0 0;-webkit-text-stroke:0.45px #fff;">Advanced Search</div>
<div class="a" style="left:1027px;top:154px;width:1px;height:17.5px;background:#aaa;"></div>
<svg class="a" style="left:1036px;top:157px;" width="11" height="12" viewBox="0 0 11 12"><circle cx="5.5" cy="3.2" r="3" fill="#fff"/><path d="M0.5 11.5 Q0.8 6.8 5.5 6.8 Q10.2 6.8 10.5 11.5 Z" fill="#fff"/></svg>
<div class="a t" style="left:1051.4px;top:158.67px;font-size:8.3px;line-height:9.96px;color:#fff;transform:scaleX(0.868);transform-origin:0 0;-webkit-text-stroke:0.45px #fff;">Welcome, Bruce Wayne ▼</div>
<div class="a" style="left:1144.5px;top:160px;width:1px;height:6px;background:#ddd;"></div>
<svg class="a" style="left:1153.5px;top:157.8px;" width="11" height="11" viewBox="0 0 11 11"><circle cx="5.5" cy="5.5" r="5.3" fill="#fff"/><text x="5.5" y="8.8" font-size="9" font-weight="bold" text-anchor="middle" fill="#606060" font-family="Liberation Sans">?</text></svg>
<svg class="a" style="left:493px;top:176px;" width="26" height="27" viewBox="0 0 26 27"><polygon points="9.4,1 24.6,13.2 22.6,26 1.4,15.2" fill="#5e5e5e" stroke="#5e5e5e" stroke-width="0.8" stroke-linejoin="round"/><polygon points="10.8,5 20.6,11.5 19.2,18.2 8.2,11.6" fill="#fff"/></svg>
<div class="a t s" style="left:521.5px;top:189.68px;font-size:15.5px;line-height:18.6px;color:#666;transform:scaleX(1.063);transform-origin:0 0;">OPTUM</div>
<div class="a t" style="left:582.5px;top:190.59px;font-size:5px;line-height:6px;color:#777;">™</div>
<div class="a t s" style="left:589px;top:194.91px;font-size:10.8px;line-height:12.96px;color:#666;transform:scaleX(0.985);transform-origin:0 0;">eFR® Platform</div>
<svg class="a" style="left:801px;top:205px;" width="10" height="11" viewBox="0 0 10 11"><path d="M1 6 L5 1.5 L9 6 M2.3 5 V10.5 H4.2 V7.5 H5.8 V10.5 H7.7 V5" fill="none" stroke="#aaa" stroke-width="1.1"/></svg>
<div class="a t s" style="left:814px;top:206.74px;font-size:8px;line-height:9.6px;color:#aaa;transform:scaleX(0.890);transform-origin:0 0;">Home</div>
<div class="a t s" style="left:855.6px;top:206.74px;font-size:8px;line-height:9.6px;color:#333;transform:scaleX(0.924);transform-origin:0 0;">Accounts</div>
<div class="a t s" style="left:903.6px;top:206.74px;font-size:8px;line-height:9.6px;color:#aaa;transform:scaleX(0.924);transform-origin:0 0;">Documents</div>
<div class="a t s" style="left:957.6px;top:206.74px;font-size:8px;line-height:9.6px;color:#aaa;transform:scaleX(0.900);transform-origin:0 0;">Financials</div>
<div class="a t s" style="left:1009px;top:206.74px;font-size:8px;line-height:9.6px;color:#aaa;transform:scaleX(0.899);transform-origin:0 0;">Audits</div>
<div class="a t s" style="left:1051px;top:206.74px;font-size:8px;line-height:9.6px;color:#aaa;transform:scaleX(0.907);transform-origin:0 0;">Administration</div>
<div class="a t s" style="left:1114px;top:206.74px;font-size:8px;line-height:9.6px;color:#aaa;transform:scaleX(0.922);transform-origin:0 0;">General Usage</div>
<div class="a" style="left:848.6px;top:219.5px;width:43.4px;height:1.3px;background:#e8b48a;"></div>
<div class="a t s2" style="left:495px;top:224.62px;font-size:6.5px;line-height:7.8px;color:#2b4f8f;transform:scaleX(0.899);transform-origin:0 0;">&gt;Home</div>
<div class="a t s2" style="left:522px;top:224.62px;font-size:6.5px;line-height:7.8px;color:#2b4f8f;transform:scaleX(0.950);transform-origin:0 0;">&gt;Accounts</div>
<div class="a t s2" style="left:559px;top:224.62px;font-size:6.5px;line-height:7.8px;color:#2b4f8f;transform:scaleX(0.957);transform-origin:0 0;">&gt;Work Accounts</div>
<div class="a" style="left:630px;top:227.5px;width:129px;height:1.3px;background:#e8b48a;"></div>
<svg class="a" style="left:609px;top:235px;" width="16" height="14" viewBox="0 0 16 14"><rect x="0.5" y="0.5" width="15" height="13" fill="#fff" stroke="#eee"/><path d="M6 2 L3 7 L6 12 M9 2 L6 7 L9 12 M12 2 L9 7 L12 12" fill="none" stroke="#e0a060" stroke-width="1"/></svg>
<div class="a" style="left:496px;top:248.2px;width:128px;height:1px;background:#aaa;"></div>
<div class="a t s" style="left:496.6px;top:251.94px;font-size:8px;line-height:9.6px;color:#333;transform:scaleX(1.034);transform-origin:0 0;">Work Accounts</div>
<svg class="a" style="left:613.9px;top:253px;" width="5" height="4.7" viewBox="0 0 5 4.7"><path d="M0 0 H5 L2.5 4.7 Z" fill="#111"/></svg>
<div class="a" style="left:496px;top:265.6px;width:128px;height:1px;background:#bbb;"></div>
<div class="a t s" style="left:496.6px;top:271.74px;font-size:8px;line-height:9.6px;color:#333;transform:scaleX(1.016);transform-origin:0 0;">Find Account</div>
<svg class="a" style="left:613.4px;top:273.3px;" width="5.2" height="6.2" viewBox="0 0 5.2 6.2"><path d="M0 0 L5.2 3.1 L0 6.2 Z" fill="#111"/></svg>
<div class="a" style="left:496px;top:286px;width:128px;height:1.5px;background:#ccc;"></div>
<div class="a" style="left:494px;top:288px;width:2px;height:19px;background:#e0904a;"></div>
<div class="a t s" style="left:510.4px;top:291.94px;font-size:8px;line-height:9.6px;color:#333;transform:scaleX(1.016);transform-origin:0 0;">Work Account</div>
<div class="a" style="left:496px;top:305px;width:128px;height:1px;background:#bbb;"></div>
<div class="a t s" style="left:637.6px;top:237.38px;font-size:15.5px;line-height:18.6px;color:#c8752f;transform:scaleX(1.041);transform-origin:0 0;">Preeti &gt;100</div>
<div class="a t s" style="left:733px;top:242.74px;font-size:8px;line-height:9.6px;color:#c8752f;font-weight:bold;transform:scaleX(0.936);transform-origin:0 0;">Svc Current Bala: $100.00</div>
<svg class="a" style="left:637px;top:256px;" width="12" height="11" viewBox="0 0 12 11"><path d="M8.5 10.5 Q10 4 4 4.2" fill="none" stroke="#1f4f8f" stroke-width="1.8"/><path d="M0.8 4.2 L5 0.8 L5 7.6 Z" fill="#1f4f8f"/></svg>
<div class="a t s" style="left:652px;top:256.94px;font-size:8px;line-height:9.6px;color:#2b5a9a;transform:scaleX(0.956);transform-origin:0 0;">Back</div>
<svg class="a" style="left:901.4px;top:235.8px;" width="19.6" height="19.6" viewBox="0 0 19.6 19.6"><rect x="0.65" y="0.65" width="18.3" height="18.3" fill="#fff" stroke="#8a8a8a" stroke-width="1.3"/><rect x="3.1" y="3.4" width="3.8" height="3.3" fill="#555"/><rect x="3.1" y="8.0" width="3.8" height="3.3" fill="#555"/><rect x="3.1" y="12.6" width="3.8" height="3.3" fill="#555"/><rect x="8.0" y="3.4" width="3.8" height="3.3" fill="#555"/><rect x="8.0" y="8.0" width="3.8" height="3.3" fill="#555"/><rect x="8.0" y="12.6" width="3.8" height="3.3" fill="#555"/><rect x="12.9" y="3.4" width="3.8" height="3.3" fill="#555"/><rect x="12.9" y="8.0" width="3.8" height="3.3" fill="#555"/><rect x="12.9" y="12.6" width="3.8" height="3.3" fill="#555"/></svg>
<svg class="a" style="left:927.4px;top:235.8px;" width="19.6" height="19.6" viewBox="0 0 19.6 19.6"><rect x="0.65" y="0.65" width="18.3" height="18.3" fill="#fff" stroke="#8a8a8a" stroke-width="1.3"/><path d="M4.5 2.5 H12 L15.2 5.7 V17 H4.5 Z" fill="#fff" stroke="#555" stroke-width="1.2"/><text x="9.8" y="14.2" font-size="8.5" font-weight="bold" text-anchor="middle" fill="#555" stroke="#555" stroke-width="0.3" font-family="Liberation Sans">W</text></svg>
<svg class="a" style="left:955px;top:235.8px;" width="19.6" height="19.6" viewBox="0 0 19.6 19.6"><rect x="0.65" y="0.65" width="18.3" height="18.3" fill="#fff" stroke="#8a8a8a" stroke-width="1.3"/><path d="M5 17 L8 3.5" stroke="#555" stroke-width="1.6"/><path d="M7.8 4 Q11 3.5 12.5 6 Q14 9 16.5 8.5 L13 11 Q10.5 11.5 9.8 9.5 Q8.8 8 6.8 9 Z" fill="#555"/></svg>
<svg class="a" style="left:982.3px;top:235.8px;" width="19.6" height="19.6" viewBox="0 0 19.6 19.6"><rect x="0.65" y="0.65" width="18.3" height="18.3" fill="#fff" stroke="#8a8a8a" stroke-width="1.3"/><text x="2.2" y="7" font-size="5.5" fill="#555" font-family="Liberation Sans">1</text><text x="2.2" y="12" font-size="5.5" fill="#555" font-family="Liberation Sans">2</text><text x="2.2" y="17" font-size="5.5" fill="#555" font-family="Liberation Sans">3</text><path d="M7.5 5.2 H16.5 M7.5 10 H16.5 M7.5 14.8 H16.5" stroke="#555" stroke-width="2.2" stroke-linecap="round"/></svg>
<svg class="a" style="left:1008.8px;top:235.8px;" width="19.6" height="19.6" viewBox="0 0 19.6 19.6"><rect x="0.65" y="0.65" width="18.3" height="18.3" fill="#fff" stroke="#8a8a8a" stroke-width="1.3"/><circle cx="7.5" cy="7" r="3.8" fill="none" stroke="#555" stroke-width="1.1"/><rect x="9" y="6.5" width="7.5" height="7.5" fill="#fff" stroke="#555" stroke-width="1.1"/><path d="M7 9 L3 16.5 H11 Z" fill="#fff" stroke="#555" stroke-width="1.1"/></svg>
<svg class="a" style="left:1036.4px;top:235.8px;" width="19.6" height="19.6" viewBox="0 0 19.6 19.6"><rect x="0.65" y="0.65" width="18.3" height="18.3" fill="#fff" stroke="#8a8a8a" stroke-width="1.3"/><path d="M3 7.5 Q9.8 1.5 16.6 7.5 L15 9.5 L12.5 8 V6.8 H7.1 V8 L4.6 9.5 Z" fill="#555"/><path d="M6.5 9 H13.1 L15 16.5 H4.6 Z" fill="#555"/><circle cx="9.8" cy="12.5" r="1.8" fill="#fff"/></svg>
<svg class="a" style="left:1064.2px;top:235.8px;" width="19.6" height="19.6" viewBox="0 0 19.6 19.6"><rect x="0.65" y="0.65" width="18.3" height="18.3" fill="#fff" stroke="#c03030" stroke-width="1.2"/><path d="M4.5 4 Q6 2.5 7 3.2 L8.5 6.2 Q8 7.5 7 7.8 Q8 11.5 11.5 13 Q12.3 12 13.5 11.6 L16.2 13.5 Q16.5 15 14.5 16.2 Q9 16.5 5.5 11 Q3 7 4.5 4 Z" fill="#b00010"/></svg>
<svg class="a" style="left:1090.4px;top:235.8px;" width="19.6" height="19.6" viewBox="0 0 19.6 19.6"><rect x="0.65" y="0.65" width="18.3" height="18.3" fill="#fff" stroke="#8a8a8a" stroke-width="1.3"/><text x="9.8" y="15.8" font-size="15.5" font-weight="bold" text-anchor="middle" fill="#555" stroke="#555" stroke-width="0.9" font-family="Liberation Sans">$</text></svg>
<svg class="a" style="left:1117px;top:235.8px;" width="19.6" height="19.6" viewBox="0 0 19.6 19.6"><path d="M9.8 0.8 L19.3 19.3 H0.3 Z" fill="#555"/><rect x="8.6" y="7" width="2.4" height="7" fill="#fff"/><rect x="8.6" y="15.2" width="2.4" height="2.2" fill="#fff"/></svg>
<svg class="a" style="left:1145.5px;top:235.8px;" width="19.6" height="19.6" viewBox="0 0 19.6 19.6"><rect x="0.65" y="0.65" width="18.3" height="18.3" fill="#fff" stroke="#8a8a8a" stroke-width="1.3"/><path d="M3.2 3.2 L16.4 16.4 M16.4 3.2 L3.2 16.4" stroke="#555" stroke-width="2.1"/></svg>
<div class="a" style="left:634.4px;top:272.4px;width:208.4px;height:67px;border:1px solid #8a8a8a;"></div>
<svg class="a" style="left:639.2px;top:278.3px;" width="6" height="5" viewBox="0 0 6 5"><path d="M3 0 L6 5 H0 Z" fill="#111"/></svg>
<div class="a t s" style="left:648.4px;top:276.34px;font-size:8px;line-height:9.6px;color:#c8752f;transform:scaleX(0.964);transform-origin:0 0;">Patient</div>
<div class="a t s2" style="left:638.4px;top:289.61px;font-size:6px;line-height:7.2px;color:#222;">Account:</div>
<div class="a t s2" style="left:684px;top:289.61px;font-size:6px;line-height:7.2px;color:#6a6a6a;transform:scaleX(1.108);transform-origin:0 0;">X0343242355</div>
<div class="a t s2" style="left:638.4px;top:298.71px;font-size:6px;line-height:7.2px;color:#222;">MRN:</div>
<div class="a t s2" style="left:684px;top:298.71px;font-size:6px;line-height:7.2px;color:#6a6a6a;transform:scaleX(1.077);transform-origin:0 0;">H054354325</div>
<div class="a t s2" style="left:638.4px;top:308.01px;font-size:6px;line-height:7.2px;color:#222;">Patient Name:</div>
<div class="a t s2" style="left:685px;top:308.01px;font-size:6px;line-height:7.2px;color:#6a6a6a;transform:scaleX(0.985);transform-origin:0 0;">ZOBRE, SUSAN</div>
<div class="a t s2" style="left:638.4px;top:316.51px;font-size:6px;line-height:7.2px;color:#222;">SSN:</div>
<div class="a t s2" style="left:683.5px;top:316.51px;font-size:6px;line-height:7.2px;color:#6a6a6a;transform:scaleX(1.142);transform-origin:0 0;">***-***-7024</div>
<div class="a t s2" style="left:638.4px;top:325.91px;font-size:6px;line-height:7.2px;color:#222;">Patient DOB:</div>
<div class="a t s2" style="left:682.8px;top:325.91px;font-size:6px;line-height:7.2px;color:#6a6a6a;transform:scaleX(1.082);transform-origin:0 0;">07/27/1966</div>
<div class="a t s2" style="left:737px;top:289.61px;font-size:6px;line-height:7.2px;color:#222;">Admit Dates:</div>
<div class="a t s2" style="left:791.5px;top:289.61px;font-size:6px;line-height:7.2px;color:#6a6a6a;transform:scaleX(1.039);transform-origin:0 0;">12/13/2008</div>
<div class="a t s2" style="left:737px;top:298.71px;font-size:6px;line-height:7.2px;color:#222;">Discharge Date:</div>
<div class="a t s2" style="left:791.5px;top:298.71px;font-size:6px;line-height:7.2px;color:#6a6a6a;transform:scaleX(1.039);transform-origin:0 0;">12/13/2008</div>
<div class="a t s2" style="left:737px;top:308.01px;font-size:6px;line-height:7.2px;color:#222;">Associated Org:</div>
<div class="a t s2" style="left:793.3px;top:308.01px;font-size:6px;line-height:7.2px;color:#6a6a6a;transform:scaleX(0.954);transform-origin:0 0;">Saratogalevel111</div>
<div class="a t s2" style="left:737px;top:316.51px;font-size:6px;line-height:7.2px;color:#222;">Corporate #:</div>
<div class="a t s2" style="left:792.4px;top:316.51px;font-size:6px;line-height:7.2px;color:#6a6a6a;transform:scaleX(1.097);transform-origin:0 0;">X0343242355</div>
<div class="a" style="left:861.4px;top:272.4px;width:246.6px;height:67px;border:1px solid #8a8a8a;"></div>
<svg class="a" style="left:866px;top:278.3px;" width="6" height="5" viewBox="0 0 6 5"><path d="M3 0 L6 5 H0 Z" fill="#111"/></svg>
<div class="a t s" style="left:875px;top:276.34px;font-size:8px;line-height:9.6px;color:#c8752f;transform:scaleX(1.031);transform-origin:0 0;">Service</div>
<div class="a t s2" style="left:875px;top:289.61px;font-size:6px;line-height:7.2px;color:#222;">Financial Class:</div>
<div class="a t s2" style="left:933px;top:289.61px;font-size:6px;line-height:7.2px;color:#6a6a6a;">BLUE CROSS</div>
<div class="a t s2" style="left:875px;top:298.71px;font-size:6px;line-height:7.2px;color:#222;">Location:</div>
<div class="a t s2" style="left:933px;top:298.71px;font-size:6px;line-height:7.2px;color:#6a6a6a;">Default</div>
<div class="a t s2" style="left:875px;top:308.01px;font-size:6px;line-height:7.2px;color:#222;">Patient Type:</div>
<div class="a t s2" style="left:933px;top:308.01px;font-size:6px;line-height:7.2px;color:#6a6a6a;">Outpatient</div>
<div class="a t s2" style="left:875px;top:316.51px;font-size:6px;line-height:7.2px;color:#222;">NPI:</div>
<div class="a t s2" style="left:875px;top:325.91px;font-size:6px;line-height:7.2px;color:#222;">Admitting Physician:</div>
<div class="a t s2" style="left:933px;top:325.91px;font-size:6px;line-height:7.2px;color:#6a6a6a;">Default</div>
<div class="a t s2" style="left:984.3px;top:289.61px;font-size:6px;line-height:7.2px;color:#222;transform:scaleX(1.096);transform-origin:0 0;">Attending Physician:</div>
<div class="a t s2" style="left:984.3px;top:298.71px;font-size:6px;line-height:7.2px;color:#222;transform:scaleX(1.093);transform-origin:0 0;">Referring Physician:</div>
<div class="a t s2" style="left:984.3px;top:308.01px;font-size:6px;line-height:7.2px;color:#222;transform:scaleX(1.083);transform-origin:0 0;">Registration Date:</div>
<div class="a t s2" style="left:1068px;top:289.61px;font-size:6px;line-height:7.2px;color:#6a6a6a;">Default</div>
<div class="a t s2" style="left:1068px;top:298.71px;font-size:6px;line-height:7.2px;color:#6a6a6a;">Default</div>
<div class="a" style="left:632.4px;top:347.4px;width:536.2px;height:21.8px;border:1px solid #e3b48a;"></div>
<svg class="a" style="left:638.5px;top:353px;" width="10" height="9" viewBox="0 0 10 9"><path d="M0 0 H10 L5 9 Z" fill="#555"/></svg>
<div class="a t s" style="left:651px;top:351.2px;font-size:11px;line-height:13.2px;color:#111;font-weight:bold;transform:scaleX(0.953);transform-origin:0 0;">HISTORY</div>
<svg class="a" style="left:1094.4px;top:350.6px;" width="15.2" height="15.2" viewBox="0 0 15.2 15.2"><rect x="0.5" y="0.5" width="14.2" height="14.2" fill="#fff" stroke="#999" stroke-width="1"/><path d="M3.5 3.5 H11.5 L8.6 7.5 V12 H6.4 V7.5 Z" fill="#555"/></svg>
<svg class="a" style="left:1113.6px;top:350.6px;" width="15.2" height="15.2" viewBox="0 0 15.2 15.2"><rect x="0.5" y="0.5" width="14.2" height="14.2" fill="#fff" stroke="#999" stroke-width="1"/><path d="M4.5 3 H9 L11 5 V12.5 H4.5 Z" fill="none" stroke="#555" stroke-width="1"/></svg>
<svg class="a" style="left:1131.6px;top:350.6px;" width="15.2" height="15.2" viewBox="0 0 15.2 15.2"><rect x="0.5" y="0.5" width="14.2" height="14.2" fill="#fff" stroke="#999" stroke-width="1"/><path d="M7.5 3 L12.5 12 H2.5 Z" fill="none" stroke="#555" stroke-width="1"/><path d="M7.5 6 V9.5 M7.5 10.5 V11.3" stroke="#555" stroke-width="1"/></svg>
<svg class="a" style="left:1150px;top:350.6px;" width="15.2" height="15.2" viewBox="0 0 15.2 15.2"><rect x="0.5" y="0.5" width="14.2" height="14.2" fill="#fff" stroke="#999" stroke-width="1"/><path d="M8 4 H4 V11.5 H11.5 V7.5" fill="none" stroke="#555" stroke-width="1.1"/><path d="M7 8.5 L12 3.5 M9.5 3.5 H12 V6" fill="none" stroke="#555" stroke-width="1.1"/></svg>
<div class="a" style="left:632.4px;top:371.4px;width:537.1px;height:179.2px;border:1px solid #9a9a9a;"></div>
<div class="a" style="left:632.4px;top:387.1px;width:528.1px;height:2.6px;background:#c8c8c8;"></div>
<div class="a" style="left:632.4px;top:406.1px;width:528.1px;height:2.6px;background:#c8c8c8;"></div>
<div class="a" style="left:632.4px;top:424.9px;width:528.1px;height:2.6px;background:#c8c8c8;"></div>
<div class="a" style="left:632.4px;top:443.9px;width:528.1px;height:2.6px;background:#c8c8c8;"></div>
<div class="a" style="left:632.4px;top:462.9px;width:528.1px;height:2.6px;background:#c8c8c8;"></div>
<div class="a" style="left:632.4px;top:481.9px;width:528.1px;height:2.6px;background:#c8c8c8;"></div>
<div class="a" style="left:632.4px;top:500.7px;width:528.1px;height:2.6px;background:#c8c8c8;"></div>
<div class="a" style="left:632.4px;top:519.3px;width:528.1px;height:2.6px;background:#c8c8c8;"></div>
<div class="a" style="left:632.4px;top:387.6px;width:528.1px;height:2.2px;background:#9a9a9a;"></div>
<div class="a" style="left:747.2px;top:371.4px;width:2px;height:168.2px;background:#c8c8c8;"></div>
<div class="a" style="left:844.8px;top:371.4px;width:2px;height:168.2px;background:#c8c8c8;"></div>
<div class="a" style="left:973.5px;top:371.4px;width:2px;height:168.2px;background:#c8c8c8;"></div>
<div class="a" style="left:845.2px;top:371.4px;width:1.4px;height:16.6px;background:#555;"></div>
<div class="a" style="left:1160.5px;top:371.4px;width:1px;height:168.6px;background:#bbb;"></div>
<div class="a t s" style="left:637.8px;top:374.59px;font-size:8.96px;line-height:10.75px;color:#222;transform:scaleX(0.902);transform-origin:0 0;">Event Date</div>
<svg class="a" style="left:682.2px;top:374.2px;" width="5.6" height="11.6" viewBox="0 0 5.6 11.6"><path d="M2.8 0.3 L5.3 4.6 H0.3 Z M2.8 11.3 L5.3 7 H0.3 Z" fill="#555"/></svg>
<div class="a t s" style="left:754px;top:374.59px;font-size:8.96px;line-height:10.75px;color:#222;transform:scaleX(0.912);transform-origin:0 0;">Event Type:</div>
<svg class="a" style="left:802.8px;top:374.2px;" width="5.6" height="11.6" viewBox="0 0 5.6 11.6"><path d="M2.8 0.3 L5.3 4.6 H0.3 Z M2.8 11.3 L5.3 7 H0.3 Z" fill="#555"/></svg>
<div class="a t s" style="left:851px;top:374.59px;font-size:8.96px;line-height:10.75px;color:#222;transform:scaleX(0.905);transform-origin:0 0;">Event:</div>
<svg class="a" style="left:881.2px;top:374.2px;" width="5.6" height="11.6" viewBox="0 0 5.6 11.6"><path d="M2.8 0.3 L5.3 4.6 H0.3 Z M2.8 11.3 L5.3 7 H0.3 Z" fill="#555"/></svg>
<div class="a t s" style="left:981px;top:374.59px;font-size:8.96px;line-height:10.75px;color:#222;transform:scaleX(0.897);transform-origin:0 0;">Event Type:</div>
<svg class="a" style="left:1027.7px;top:374.2px;" width="5.6" height="11.6" viewBox="0 0 5.6 11.6"><path d="M2.8 0.3 L5.3 4.6 H0.3 Z M2.8 11.3 L5.3 7 H0.3 Z" fill="#555"/></svg>
<div class="a t s" style="left:638.5px;top:392.95px;font-size:9.2px;line-height:11.04px;color:#222;transform:scaleX(0.900);transform-origin:0 0;">10/16/2014   06:47:03AM</div>
<div class="a t s" style="left:754px;top:392.95px;font-size:9.2px;line-height:11.04px;color:#222;transform:scaleX(0.913);transform-origin:0 0;">System</div>
<div class="a t s" style="left:851px;top:392.95px;font-size:9.2px;line-height:11.04px;color:#222;transform:scaleX(0.900);transform-origin:0 0;">Sent to worklist Preeti &gt;100</div>
<div class="a t s" style="left:638.5px;top:411.85px;font-size:9.2px;line-height:11.04px;color:#222;transform:scaleX(0.900);transform-origin:0 0;">10/16/2014   06:47:03AM</div>
<div class="a t s" style="left:754px;top:411.85px;font-size:9.2px;line-height:11.04px;color:#222;transform:scaleX(0.913);transform-origin:0 0;">System</div>
<div class="a t s" style="left:851px;top:411.85px;font-size:9.2px;line-height:11.04px;color:#222;transform:scaleX(0.875);transform-origin:0 0;">Send to milestone: ABC</div>
<div class="a t s" style="left:981px;top:407.09px;font-size:8.96px;line-height:10.75px;color:#222;transform:scaleX(0.895);transform-origin:0 0;">Previous subscriber: 27 DENKERS DR.,</div>
<div class="a t s" style="left:981px;top:415.89px;font-size:8.96px;line-height:10.75px;color:#222;transform:scaleX(0.865);transform-origin:0 0;">BALLSTON, NY 12091</div>
<div class="a t s" style="left:638.5px;top:430.75px;font-size:9.2px;line-height:11.04px;color:#222;transform:scaleX(0.900);transform-origin:0 0;">10/16/2014   06:47:03AM</div>
<div class="a t s2" style="left:754px;top:428.21px;font-size:6px;line-height:7.2px;color:#222;transform:scaleX(1.093);transform-origin:0 0;">Govindarajou</div>
<div class="a t s2" style="left:754px;top:436.21px;font-size:6px;line-height:7.2px;color:#222;transform:scaleX(1.102);transform-origin:0 0;">Soupramanien</div>
<div class="a t s2" style="left:851px;top:432.21px;font-size:6px;line-height:7.2px;color:#222;transform:scaleX(1.139);transform-origin:0 0;">Add Subscriber Information: 667</div>
<div class="a t s" style="left:638.5px;top:449.75px;font-size:9.2px;line-height:11.04px;color:#222;transform:scaleX(0.900);transform-origin:0 0;">10/16/2014   06:47:03AM</div>
<div class="a t s" style="left:754px;top:449.75px;font-size:9.2px;line-height:11.04px;color:#222;transform:scaleX(0.913);transform-origin:0 0;">System</div>
<div class="a t s" style="left:851px;top:449.75px;font-size:9.2px;line-height:11.04px;color:#222;transform:scaleX(0.900);transform-origin:0 0;">Sent to worklist Preeti &gt;100</div>
<div class="a t s" style="left:638.5px;top:468.75px;font-size:9.2px;line-height:11.04px;color:#222;transform:scaleX(0.900);transform-origin:0 0;">10/16/2014   06:47:03AM</div>
<div class="a t s" style="left:754px;top:468.75px;font-size:9.2px;line-height:11.04px;color:#222;transform:scaleX(0.913);transform-origin:0 0;">System</div>
<div class="a t s" style="left:851px;top:468.75px;font-size:9.2px;line-height:11.04px;color:#222;transform:scaleX(0.875);transform-origin:0 0;">Send to milestone: ABC</div>
<div class="a t s" style="left:981px;top:463.99px;font-size:8.96px;line-height:10.75px;color:#222;transform:scaleX(0.895);transform-origin:0 0;">Previous subscriber: 27 DENKERS DR.,</div>
<div class="a t s" style="left:981px;top:472.79px;font-size:8.96px;line-height:10.75px;color:#222;transform:scaleX(0.865);transform-origin:0 0;">BALLSTON, NY 12091</div>
<div class="a t s" style="left:638.5px;top:487.65px;font-size:9.2px;line-height:11.04px;color:#222;transform:scaleX(0.900);transform-origin:0 0;">10/16/2014   06:47:03AM</div>
<div class="a t s2" style="left:754px;top:485.11px;font-size:6px;line-height:7.2px;color:#222;transform:scaleX(1.093);transform-origin:0 0;">Govindarajou</div>
<div class="a t s2" style="left:754px;top:493.11px;font-size:6px;line-height:7.2px;color:#222;transform:scaleX(1.102);transform-origin:0 0;">Soupramanien</div>
<div class="a t s2" style="left:851px;top:489.11px;font-size:6px;line-height:7.2px;color:#222;transform:scaleX(1.139);transform-origin:0 0;">Add Subscriber Information: 667</div>
<div class="a t s" style="left:638.5px;top:506.35px;font-size:9.2px;line-height:11.04px;color:#222;transform:scaleX(0.900);transform-origin:0 0;">10/16/2014   06:47:03AM</div>
<div class="a t s" style="left:754px;top:506.35px;font-size:9.2px;line-height:11.04px;color:#222;transform:scaleX(0.913);transform-origin:0 0;">System</div>
<div class="a t s" style="left:851px;top:506.35px;font-size:9.2px;line-height:11.04px;color:#222;transform:scaleX(0.900);transform-origin:0 0;">Sent to worklist Preeti &gt;100</div>
<div class="a t s" style="left:638.5px;top:525.15px;font-size:9.2px;line-height:11.04px;color:#222;transform:scaleX(0.900);transform-origin:0 0;">10/16/2014   06:47:03AM</div>
<div class="a t s" style="left:754px;top:525.15px;font-size:9.2px;line-height:11.04px;color:#222;transform:scaleX(0.913);transform-origin:0 0;">System</div>
<div class="a t s" style="left:851px;top:525.15px;font-size:9.2px;line-height:11.04px;color:#222;transform:scaleX(0.875);transform-origin:0 0;">Send to milestone: ABC</div>
<div class="a t s" style="left:981px;top:520.39px;font-size:8.96px;line-height:10.75px;color:#222;transform:scaleX(0.895);transform-origin:0 0;">Previous subscriber: 27 DENKERS DR.,</div>
<div class="a t s" style="left:981px;top:529.19px;font-size:8.96px;line-height:10.75px;color:#222;transform:scaleX(0.865);transform-origin:0 0;">BALLSTON, NY 12091</div>
<svg class="a" style="left:1162px;top:373px;" width="7" height="6" viewBox="0 0 7 6"><path d="M3.5 1 L6 4.5 H1 Z" fill="#444"/></svg>
<div class="a" style="left:1163.2px;top:380px;width:4.4px;height:14.5px;background:#666;border-radius:2px;"></div>
<svg class="a" style="left:1162px;top:532px;" width="7" height="6" viewBox="0 0 7 6"><path d="M3.5 5 L6 1.5 H1 Z" fill="#444"/></svg>
<div class="a" style="left:632.4px;top:539.6px;width:537.1px;height:1px;background:#9a9a9a;"></div>
<svg class="a" style="left:634px;top:542px;" width="4" height="7" viewBox="0 0 4 7"><path d="M0.5 3.5 L3.5 0.8 V6.2 Z" fill="#444"/></svg>
<div class="a" style="left:640px;top:543px;width:14.4px;height:4.8px;background:#777;border-radius:2.4px;"></div>
<svg class="a" style="left:1165px;top:542px;" width="4" height="7" viewBox="0 0 4 7"><path d="M3.5 3.5 L0.5 0.8 V6.2 Z" fill="#444"/></svg>
<div class="a" style="left:629px;top:554.4px;width:539px;height:22.2px;border:1px solid #e3b48a;"></div>
<svg class="a" style="left:635.3px;top:560.2px;" width="8" height="9.2" viewBox="0 0 8 9.2"><path d="M0 0 L8 4.6 L0 9.2 Z" fill="#555"/></svg>
<div class="a t s" style="left:647px;top:558.69px;font-size:10.5px;line-height:12.6px;color:#111;font-weight:bold;">PLAN</div>
<svg class="a" style="left:1081px;top:558px;" width="14.6" height="15" viewBox="0 0 14.6 15"><rect x="0.6" y="0.6" width="13.4" height="13.8" fill="#fff" stroke="#333" stroke-width="1.4"/><path d="M7.3 3 V12 M2.8 7.5 H11.8" stroke="#444" stroke-width="1.9"/></svg>
<svg class="a" style="left:1095.4px;top:558px;" width="14.6" height="15" viewBox="0 0 14.6 15"><rect x="0.6" y="0.6" width="13.4" height="13.8" fill="#fff" stroke="#aaa" stroke-width="1"/><path d="M3.6 4.3 H11 M5.8 4.2 V3 H8.8 V4.2" fill="none" stroke="#777" stroke-width="1.1"/><path d="M4.4 5.2 L5 12.3 H9.6 L10.2 5.2 Z" fill="none" stroke="#777" stroke-width="1.1"/><path d="M6.3 6.5 V11 M8.3 6.5 V11" stroke="#888" stroke-width="0.9"/></svg>
<svg class="a" style="left:1112.4px;top:558px;" width="14.6" height="15" viewBox="0 0 14.6 15"><rect x="0.6" y="0.6" width="13.4" height="13.8" fill="#fff" stroke="#aaa" stroke-width="1"/><path d="M3.2 12 L3.8 9.3 L9.8 3.3 L11.8 5.3 L5.8 11.3 Z" fill="none" stroke="#777" stroke-width="1.2"/><path d="M8.8 4.3 L10.8 6.3" stroke="#777" stroke-width="1"/></svg>
<svg class="a" style="left:1129.6px;top:558px;" width="14.6" height="15" viewBox="0 0 14.6 15"><rect x="0.6" y="0.6" width="13.4" height="13.8" fill="#fff" stroke="#aaa" stroke-width="1"/><path d="M2.2 7.5 Q7.3 2.2 12.4 7.5 Q7.3 12.8 2.2 7.5 Z" fill="#555"/><ellipse cx="7.3" cy="7.5" rx="2.6" ry="1.8" fill="#fff"/><circle cx="7.3" cy="7.5" r="1" fill="#555"/></svg>
<svg class="a" style="left:1148.4px;top:558px;" width="14.6" height="15" viewBox="0 0 14.6 15"><rect x="0.6" y="0.6" width="13.4" height="13.8" fill="#fff" stroke="#aaa" stroke-width="1"/><path d="M8 3.6 H4.6 Q3.4 3.6 3.4 4.8 V10.6 Q3.4 11.8 4.6 11.8 H10.3 Q11.5 11.8 11.5 10.6 V7.3" fill="none" stroke="#555" stroke-width="1.3"/><path d="M6.6 8.6 L11.5 3.5 M9.2 3.2 H11.8 V5.8" fill="none" stroke="#555" stroke-width="1.2"/></svg>
<div class="a" style="left:629.4px;top:580.4px;width:538.6px;height:21.2px;border:1px solid #e3b48a;"></div>
<svg class="a" style="left:636.7px;top:585.2px;" width="8.3" height="10" viewBox="0 0 8.3 10"><path d="M0 0 L8.3 5 L0 10 Z" fill="#555"/></svg>
<div class="a t s" style="left:649px;top:583.89px;font-size:10.5px;line-height:12.6px;color:#111;font-weight:bold;">FINANCIAL</div>
<div class="a" style="left:699.4px;top:609px;width:64.1px;height:24.6px;border:1px solid #999;"></div>
<div class="a t s" style="left:713.5px;top:610.87px;font-size:9.5px;line-height:11.4px;color:#222;">Demand</div>
<div class="a t s" style="left:719.3px;top:620.47px;font-size:9.5px;line-height:11.4px;color:#222;">Letter</div>
<div class="a" style="left:766.5px;top:609px;width:63.7px;height:24.6px;border:1px solid #999;"></div>
<div class="a t s" style="left:787px;top:610.87px;font-size:9.5px;line-height:11.4px;color:#222;">Enter</div>
<div class="a t s" style="left:773.71px;top:620.47px;font-size:9.5px;line-height:11.4px;color:#222;">Transaction</div>
<div class="a" style="left:832.3px;top:609px;width:64.4px;height:24.6px;border:1px solid #999;"></div>
<div class="a t s" style="left:851.83px;top:615.67px;font-size:9.5px;line-height:11.4px;color:#222;">Finish</div>
<div class="a" style="left:899.4px;top:609px;width:63.9px;height:24.6px;border:1px solid #999;"></div>
<div class="a t s" style="left:918.68px;top:615.67px;font-size:9.5px;line-height:11.4px;color:#222;">Assist</div>
<div class="a" style="left:966.5px;top:609px;width:65px;height:24.6px;border:1px solid #999;"></div>
<div class="a t s" style="left:981.58px;top:615.67px;font-size:9.5px;line-height:11.4px;color:#222;">Forward</div>
<div class="a" style="left:1034.2px;top:609px;width:64.1px;height:24.6px;border:1px solid #999;"></div>
<div class="a t s" style="left:1056.48px;top:615.67px;font-size:9.5px;line-height:11.4px;color:#222;">Hold</div>
<div class="a" style="left:1101.5px;top:609px;width:65px;height:24.6px;border:1px solid #999;"></div>
<div class="a t s" style="left:1119.74px;top:615.67px;font-size:9.5px;line-height:11.4px;color:#222;">Assign</div>
<div class="a t s2" style="left:501px;top:652.22px;font-size:6.5px;line-height:7.8px;color:#333;transform:scaleX(0.953);transform-origin:0 0;">(C) Optum 2015 - All Rights Reserved</div>
<div class="a" style="left:613.9px;top:652.5px;width:1.2px;height:7px;background:#333;"></div>
<div class="a" style="left:656.1px;top:652.5px;width:1.2px;height:7px;background:#333;"></div>
<div class="a" style="left:718px;top:652.5px;width:1.2px;height:7px;background:#333;"></div>
<div class="a t s2" style="left:620px;top:651.82px;font-size:6.5px;line-height:7.8px;color:#2b4f8f;transform:scaleX(0.884);transform-origin:0 0;">Privacy Poli</div>
<div class="a t s2" style="left:663px;top:652.22px;font-size:6.5px;line-height:7.8px;color:#2b4f8f;transform:scaleX(0.942);transform-origin:0 0;">Terms and Condit</div>
<div class="a t s2" style="left:724.4px;top:652.22px;font-size:6.5px;line-height:7.8px;color:#2b4f8f;transform:scaleX(0.898);transform-origin:0 0;">Help</div></div></body></html>
